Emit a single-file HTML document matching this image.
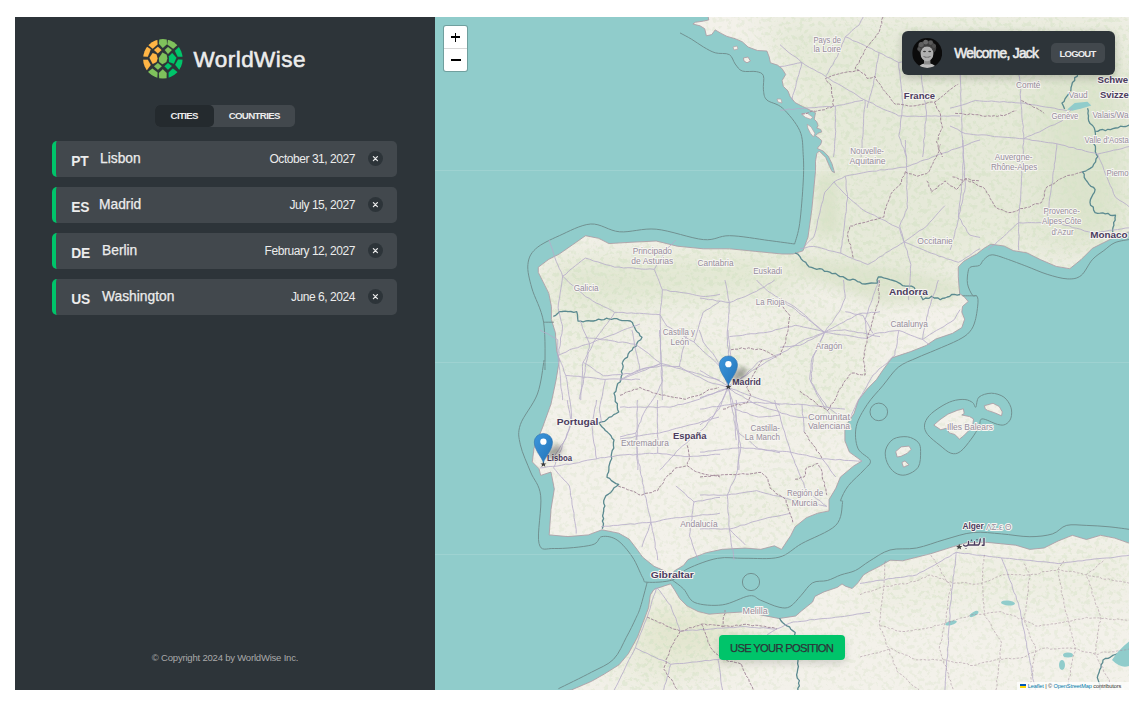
<!DOCTYPE html>
<html><head><meta charset="utf-8">
<style>
*{margin:0;padding:0;box-sizing:border-box}
html,body{width:1145px;height:707px;background:#fff;overflow:hidden;font-family:"Liberation Sans",sans-serif}
.app{position:absolute;left:15px;top:17px;width:1114px;height:673px}
.side{position:absolute;left:0;top:0;width:420px;height:673px;background:#2d3439}
.logo{position:absolute;left:125px;top:19px;width:46px;height:46px}
.brand{position:absolute;left:178.5px;top:30px;font-size:22.5px;font-weight:normal;color:#ececec;letter-spacing:0.45px;-webkit-text-stroke:0.55px #ececec}
.tabs{position:absolute;left:140px;top:88px;width:140px;height:21.5px;background:#42484d;border-radius:5px}
.tab{position:absolute;top:0;height:21.5px;font-size:9.7px;font-weight:bold;color:#ececec;line-height:22.6px;text-align:center;letter-spacing:-0.65px}
.tab.a{left:0;width:58.5px;background:#242a2e;border-radius:5px}
.tab.b{left:58.5px;width:81.5px}
.item{position:absolute;left:37px;width:345px;height:36px;background:#42484d;border-radius:5px;border-left:4px solid #00c46a}
.flag{position:absolute;left:15.3px;top:12.5px;font-size:13.8px;font-weight:bold;color:#ececec;letter-spacing:-0.3px}
.name{position:absolute;top:10.3px;font-size:13.8px;color:#ececec;-webkit-text-stroke:0.25px #ececec}
.date{position:absolute;right:42px;top:11px;font-size:12px;color:#ececec;letter-spacing:-0.45px}
.del{position:absolute;right:14px;top:10px;width:15px;height:15px;border-radius:50%;background:#2d3439}
.copy{position:absolute;left:0;width:420px;top:635px;text-align:center;font-size:9.5px;color:#aaa;letter-spacing:-0.2px}
.map{position:absolute;left:420px;top:0;width:694px;height:673px;overflow:hidden;background:#90cccb}
.map svg{position:absolute;left:0;top:0}
.zoom{position:absolute;left:8.8px;top:8.6px;width:23px;height:45.5px;background:#fff;border-radius:2px;box-shadow:0 0 0 1px rgba(0,0,0,0.22)}
.zoom .d{position:absolute;left:0;top:22.7px;width:23px;height:1px;background:#d8d8d8}
.zoom .h{position:absolute;background:#000}
.user{position:absolute;left:467px;top:14px;width:213px;height:44.2px;background:#2d3439;border-radius:6px;box-shadow:0 3px 8px rgba(0,0,0,0.2)}
.user .ava{position:absolute;left:10px;top:7px;width:30.4px;height:30px}
.welc{position:absolute;left:52.3px;top:15px;font-size:13.8px;font-weight:normal;color:#ececec;letter-spacing:-0.72px;-webkit-text-stroke:0.55px #ececec}
.logout{position:absolute;left:149px;top:11.8px;width:53.8px;height:20.7px;background:#42484d;border-radius:5px;font-size:9.5px;font-weight:bold;color:#ececec;text-align:center;line-height:21.5px;letter-spacing:-0.8px;text-indent:-0.8px}
.pos{position:absolute;left:284px;top:617.5px;width:126px;height:25.6px;background:#00c46a;border-radius:4px;font-size:11.2px;color:#2d3439;text-align:center;line-height:27px;box-shadow:0 3px 8px rgba(0,0,0,0.15);letter-spacing:-0.68px;text-indent:-0.68px;-webkit-text-stroke:0.25px #2d3439}
.attr{position:absolute;right:0;bottom:0;width:112px;height:8.2px;background:rgba(255,255,255,0.75);font-size:5.6px;line-height:8.4px;padding:0 0 0 2.7px;color:#333;white-space:nowrap;letter-spacing:-0.1px}
.attr b{font-weight:normal;color:#0078a8}
</style></head><body>
<div class="app">
 <div class="side">
  <svg class="logo" viewBox="0 0 707 707"><defs><clipPath id="lgc"><circle cx="351.5" cy="350" r="304"/></clipPath></defs><g clip-path="url(#lgc)"><path d="M97.9 116.1 L172.7 54.9 L262.9 16.6 L270.0 130.0 L195.0 195.0 Z" fill="#ffb545" stroke="#ffb545" stroke-width="2" stroke-linejoin="round"/><path d="M8.3 315.3 L30.2 224.4 L74.9 143.8 L165.0 205.0 L150.0 245.0 L120.0 320.0 Z" fill="#ffb545" stroke="#ffb545" stroke-width="2" stroke-linejoin="round"/><path d="M215.0 215.0 L275.0 165.0 L330.0 215.0 L275.0 270.0 Z" fill="#ffb545" stroke="#ffb545" stroke-width="2" stroke-linejoin="round"/><path d="M145.0 335.0 L195.0 260.0 L255.0 285.0 L270.0 345.0 L255.0 400.0 L195.0 430.0 Z" fill="#ffb545" stroke="#ffb545" stroke-width="2" stroke-linejoin="round"/><path d="M6.9 367.4 L120.0 365.0 L165.0 445.0 L79.1 561.8 L26.4 465.5 Z" fill="#ffb545" stroke="#ffb545" stroke-width="2" stroke-linejoin="round"/><path d="M290.0 120.0 L303.4 8.4 L407.5 9.6 L415.0 125.0 L350.0 185.0 Z" fill="#7fc15c" stroke="#7fc15c" stroke-width="2" stroke-linejoin="round"/><path d="M436.3 15.6 L522.6 50.4 L603.3 114.1 L510.0 195.0 L420.0 130.0 Z" fill="#7fc15c" stroke="#7fc15c" stroke-width="2" stroke-linejoin="round"/><path d="M380.0 215.0 L430.0 170.0 L490.0 215.0 L430.0 275.0 Z" fill="#7fc15c" stroke="#7fc15c" stroke-width="2" stroke-linejoin="round"/><path d="M290.0 340.0 L345.0 255.0 L410.0 290.0 L420.0 345.0 L405.0 400.0 L345.0 435.0 L295.0 400.0 Z" fill="#7fc15c" stroke="#7fc15c" stroke-width="2" stroke-linejoin="round"/><path d="M215.0 465.0 L275.0 415.0 L335.0 465.0 L275.0 520.0 Z" fill="#7fc15c" stroke="#7fc15c" stroke-width="2" stroke-linejoin="round"/><path d="M91.8 577.1 L190.0 500.0 L270.0 560.0 L263.5 683.6 L172.7 645.1 Z" fill="#7fc15c" stroke="#7fc15c" stroke-width="2" stroke-linejoin="round"/><path d="M290.0 570.0 L350.0 510.0 L410.0 570.0 L406.6 690.6 L298.7 690.9 Z" fill="#7fc15c" stroke="#7fc15c" stroke-width="2" stroke-linejoin="round"/><path d="M535.0 225.0 L626.9 142.2 L668.3 213.5 L694.8 316.1 L580.0 320.0 Z" fill="#00c46a" stroke="#00c46a" stroke-width="2" stroke-linejoin="round"/><path d="M445.0 310.0 L495.0 260.0 L560.0 335.0 L520.0 425.0 L445.0 400.0 Z" fill="#00c46a" stroke="#00c46a" stroke-width="2" stroke-linejoin="round"/><path d="M375.0 465.0 L430.0 415.0 L490.0 460.0 L430.0 520.0 Z" fill="#00c46a" stroke="#00c46a" stroke-width="2" stroke-linejoin="round"/><path d="M540.0 440.0 L585.0 360.0 L696.1 367.0 L676.9 464.8 L629.7 554.1 Z" fill="#00c46a" stroke="#00c46a" stroke-width="2" stroke-linejoin="round"/><path d="M441.6 683.0 L440.0 560.0 L505.0 500.0 L609.6 579.0 L527.7 646.6 Z" fill="#00c46a" stroke="#00c46a" stroke-width="2" stroke-linejoin="round"/></g></svg>
  <div class="brand">WorldWise</div>
  <div class="tabs"><div class="tab a">CITIES</div><div class="tab b">COUNTRIES</div></div>
  <div class="item" style="top:124px"><span class="flag">PT</span><span class="name" style="left:44px">Lisbon</span><span class="date">October 31, 2027</span><span class="del"><svg width="15" height="15" viewBox="0 0 15 15" style="position:absolute;left:0;top:0"><path d="M5.4 5.6 L9.4 9.6 M9.4 5.6 L5.4 9.6" stroke="#ececec" stroke-width="1.25" stroke-linecap="round"/></svg></span></div>
  <div class="item" style="top:170px"><span class="flag">ES</span><span class="name" style="left:43px">Madrid</span><span class="date">July 15, 2027</span><span class="del"><svg width="15" height="15" viewBox="0 0 15 15" style="position:absolute;left:0;top:0"><path d="M5.4 5.6 L9.4 9.6 M9.4 5.6 L5.4 9.6" stroke="#ececec" stroke-width="1.25" stroke-linecap="round"/></svg></span></div>
  <div class="item" style="top:216px"><span class="flag">DE</span><span class="name" style="left:46px">Berlin</span><span class="date">February 12, 2027</span><span class="del"><svg width="15" height="15" viewBox="0 0 15 15" style="position:absolute;left:0;top:0"><path d="M5.4 5.6 L9.4 9.6 M9.4 5.6 L5.4 9.6" stroke="#ececec" stroke-width="1.25" stroke-linecap="round"/></svg></span></div>
  <div class="item" style="top:262px"><span class="flag">US</span><span class="name" style="left:46px">Washington</span><span class="date">June 6, 2024</span><span class="del"><svg width="15" height="15" viewBox="0 0 15 15" style="position:absolute;left:0;top:0"><path d="M5.4 5.6 L9.4 9.6 M9.4 5.6 L5.4 9.6" stroke="#ececec" stroke-width="1.25" stroke-linecap="round"/></svg></span></div>
  <div class="copy">© Copyright 2024 by WorldWise Inc.</div>
 </div>
 <div class="map">
  <svg width="694" height="673" viewBox="435 17 694 673"><defs><clipPath id="lc"><path d="M707.5 10.0 L708.2 17.0 L708.8 19.9 L703.5 21.1 L695.3 22.3 L692.9 24.0 L700.0 25.8 L704.7 28.7 L706.4 35.8 L711.7 34.6 L715.2 29.9 L721.1 33.4 L727.0 36.4 L735.2 38.7 L742.2 41.7 L748.1 47.0 L757.5 50.5 L766.9 51.0 L769.2 57.0 L770.4 62.8 L777.5 65.1 L782.1 68.7 L785.7 74.5 L782.1 80.4 L783.3 86.3 L788.0 91.0 L790.0 96.3 L795.1 102.6 L802.7 106.5 L810.4 110.3 L815.5 112.8 L814.2 119.2 L816.8 121.8 L818.0 125.6 L816.8 128.1 L820.6 129.4 L821.8 131.9 L818.0 133.2 L815.5 135.8 L819.3 138.3 L821.8 140.9 L820.6 144.7 L818.0 147.2 L817.4 148.5 L823.1 151.0 L828.2 156.1 L832.0 163.8 L834.6 172.7 L832.0 171.4 L829.5 166.3 L825.7 157.4 L819.3 151.0 L816.8 153.6 L815.5 161.2 L815.5 171.4 L814.2 185.0 L811.8 209.6 L808.0 237.0 L803.0 250.8 L793.0 254.0 L782.0 254.0 L755.8 251.4 L729.6 248.8 L703.4 248.8 L677.2 246.2 L656.2 241.0 L630.0 242.3 L609.0 243.6 L598.6 238.3 L585.5 235.7 L572.4 244.9 L559.3 254.0 L548.8 259.3 L538.3 267.2 L538.3 272.4 L543.6 282.9 L548.8 293.4 L551.4 306.5 L551.4 319.6 L555.4 332.7 L556.7 351.0 L559.4 360.0 L556.0 380.4 L551.0 404.0 L542.4 427.9 L534.0 448.3 L532.3 461.9 L539.0 468.7 L540.7 475.4 L551.0 472.0 L554.3 489.0 L551.0 509.4 L549.2 534.9 L568.0 536.6 L588.3 534.9 L601.9 529.8 L618.8 533.2 L629.0 539.0 L636.0 548.0 L642.7 557.2 L654.0 566.3 L665.0 571.0 L668.7 576.5 L670.5 580.2 L674.2 571.0 L683.4 565.5 L688.1 559.5 L706.3 552.7 L722.2 549.3 L744.9 548.1 L760.8 549.3 L774.4 545.8 L781.5 549.4 L790.6 535.8 L795.1 526.8 L806.4 517.7 L817.7 513.2 L829.0 510.9 L829.0 499.6 L835.8 488.3 L840.4 477.0 L854.0 465.7 L861.9 461.1 L849.4 452.1 L844.9 440.8 L844.9 427.2 L854.0 413.6 L858.5 400.0 L867.2 389.0 L876.5 379.6 L882.7 370.3 L892.0 357.8 L910.7 351.6 L926.3 345.4 L935.6 339.1 L952.6 333.3 L961.8 327.6 L964.6 319.2 L961.8 312.1 L962.5 306.4 L968.2 301.5 L963.9 296.5 L959.7 293.7 L959.0 286.6 L958.3 276.7 L958.3 266.9 L963.9 261.2 L971.0 257.0 L976.6 254.1 L983.7 248.5 L990.8 244.2 L1004.1 246.0 L1013.2 250.6 L1026.8 252.8 L1040.4 259.6 L1056.2 266.4 L1069.8 268.7 L1081.1 259.6 L1092.4 248.3 L1103.8 242.6 L1115.0 237.0 L1126.4 232.4 L1140.0 230.2 L1140.0 10.0 Z M540.0 700.0 L560.0 691.0 L571.3 690.0 L591.5 681.3 L604.4 674.0 L619.0 664.8 L628.3 653.8 L637.4 637.2 L643.0 622.5 L648.5 607.8 L650.3 595.0 L654.0 589.4 L665.0 585.7 L670.5 583.9 L674.2 589.4 L679.7 598.6 L687.1 606.0 L698.1 611.5 L709.1 614.2 L720.0 613.3 L729.0 612.8 L747.2 611.7 L760.8 615.0 L779.0 618.5 L795.7 616.0 L801.3 611.1 L812.6 602.0 L814.9 596.4 L823.9 591.9 L837.5 587.3 L842.0 583.9 L845.4 586.2 L852.2 588.5 L857.9 582.8 L863.5 574.9 L869.2 571.5 L880.5 565.8 L890.0 560.2 L902.5 560.8 L930.8 553.7 L953.4 546.6 L967.6 542.4 L987.4 542.4 L1015.7 545.2 L1029.8 549.4 L1044.0 548.0 L1058.1 541.0 L1072.3 535.3 L1086.4 539.5 L1100.6 535.3 L1114.7 538.1 L1131.0 543.8 L1140.0 545.0 L1140.0 700.0 Z M933.8 425.1 L940.0 419.7 L947.8 414.2 L957.2 410.4 L963.4 408.8 L964.2 413.5 L961.8 415.0 L969.6 416.6 L973.5 418.9 L972.7 425.1 L969.6 429.8 L963.4 436.0 L959.5 439.1 L954.8 434.5 L949.4 432.9 L946.3 428.2 L940.8 429.8 Z M984.4 405.7 L993.0 403.3 L999.2 406.5 L1002.3 411.9 L1001.5 415.8 L994.5 412.7 L987.5 410.4 L985.2 408.8 Z M895.7 451.6 L901.1 446.9 L908.9 446.1 L911.2 449.3 L907.4 453.2 L901.1 456.3 L897.2 457.0 Z M901.9 462.5 L905.0 460.9 L908.9 464.8 L903.5 467.2 Z M743.4 58.0 L748.0 57.0 L750.4 61.0 L747.0 62.8 L744.0 61.0 Z"/></clipPath><filter id="b12" x="-50%" y="-50%" width="200%" height="200%"><feGaussianBlur stdDeviation="16"/></filter><filter id="b6" x="-50%" y="-50%" width="200%" height="200%"><feGaussianBlur stdDeviation="6"/></filter><filter id="sh" x="-50%" y="-50%" width="200%" height="200%"><feGaussianBlur stdDeviation="2.5"/></filter><linearGradient id="mk" x1="0" y1="0" x2="1" y2="1"><stop offset="0" stop-color="#3d97dd"/><stop offset="1" stop-color="#2273b8"/></linearGradient></defs>
<path d="M707.5 10.0 L708.2 17.0 L708.8 19.9 L703.5 21.1 L695.3 22.3 L692.9 24.0 L700.0 25.8 L704.7 28.7 L706.4 35.8 L711.7 34.6 L715.2 29.9 L721.1 33.4 L727.0 36.4 L735.2 38.7 L742.2 41.7 L748.1 47.0 L757.5 50.5 L766.9 51.0 L769.2 57.0 L770.4 62.8 L777.5 65.1 L782.1 68.7 L785.7 74.5 L782.1 80.4 L783.3 86.3 L788.0 91.0 L790.0 96.3 L795.1 102.6 L802.7 106.5 L810.4 110.3 L815.5 112.8 L814.2 119.2 L816.8 121.8 L818.0 125.6 L816.8 128.1 L820.6 129.4 L821.8 131.9 L818.0 133.2 L815.5 135.8 L819.3 138.3 L821.8 140.9 L820.6 144.7 L818.0 147.2 L817.4 148.5 L823.1 151.0 L828.2 156.1 L832.0 163.8 L834.6 172.7 L832.0 171.4 L829.5 166.3 L825.7 157.4 L819.3 151.0 L816.8 153.6 L815.5 161.2 L815.5 171.4 L814.2 185.0 L811.8 209.6 L808.0 237.0 L803.0 250.8 L793.0 254.0 L782.0 254.0 L755.8 251.4 L729.6 248.8 L703.4 248.8 L677.2 246.2 L656.2 241.0 L630.0 242.3 L609.0 243.6 L598.6 238.3 L585.5 235.7 L572.4 244.9 L559.3 254.0 L548.8 259.3 L538.3 267.2 L538.3 272.4 L543.6 282.9 L548.8 293.4 L551.4 306.5 L551.4 319.6 L555.4 332.7 L556.7 351.0 L559.4 360.0 L556.0 380.4 L551.0 404.0 L542.4 427.9 L534.0 448.3 L532.3 461.9 L539.0 468.7 L540.7 475.4 L551.0 472.0 L554.3 489.0 L551.0 509.4 L549.2 534.9 L568.0 536.6 L588.3 534.9 L601.9 529.8 L618.8 533.2 L629.0 539.0 L636.0 548.0 L642.7 557.2 L654.0 566.3 L665.0 571.0 L668.7 576.5 L670.5 580.2 L674.2 571.0 L683.4 565.5 L688.1 559.5 L706.3 552.7 L722.2 549.3 L744.9 548.1 L760.8 549.3 L774.4 545.8 L781.5 549.4 L790.6 535.8 L795.1 526.8 L806.4 517.7 L817.7 513.2 L829.0 510.9 L829.0 499.6 L835.8 488.3 L840.4 477.0 L854.0 465.7 L861.9 461.1 L849.4 452.1 L844.9 440.8 L844.9 427.2 L854.0 413.6 L858.5 400.0 L867.2 389.0 L876.5 379.6 L882.7 370.3 L892.0 357.8 L910.7 351.6 L926.3 345.4 L935.6 339.1 L952.6 333.3 L961.8 327.6 L964.6 319.2 L961.8 312.1 L962.5 306.4 L968.2 301.5 L963.9 296.5 L959.7 293.7 L959.0 286.6 L958.3 276.7 L958.3 266.9 L963.9 261.2 L971.0 257.0 L976.6 254.1 L983.7 248.5 L990.8 244.2 L1004.1 246.0 L1013.2 250.6 L1026.8 252.8 L1040.4 259.6 L1056.2 266.4 L1069.8 268.7 L1081.1 259.6 L1092.4 248.3 L1103.8 242.6 L1115.0 237.0 L1126.4 232.4 L1140.0 230.2 L1140.0 10.0 Z" fill="#f3f1ea"/>
<path d="M540.0 700.0 L560.0 691.0 L571.3 690.0 L591.5 681.3 L604.4 674.0 L619.0 664.8 L628.3 653.8 L637.4 637.2 L643.0 622.5 L648.5 607.8 L650.3 595.0 L654.0 589.4 L665.0 585.7 L670.5 583.9 L674.2 589.4 L679.7 598.6 L687.1 606.0 L698.1 611.5 L709.1 614.2 L720.0 613.3 L729.0 612.8 L747.2 611.7 L760.8 615.0 L779.0 618.5 L795.7 616.0 L801.3 611.1 L812.6 602.0 L814.9 596.4 L823.9 591.9 L837.5 587.3 L842.0 583.9 L845.4 586.2 L852.2 588.5 L857.9 582.8 L863.5 574.9 L869.2 571.5 L880.5 565.8 L890.0 560.2 L902.5 560.8 L930.8 553.7 L953.4 546.6 L967.6 542.4 L987.4 542.4 L1015.7 545.2 L1029.8 549.4 L1044.0 548.0 L1058.1 541.0 L1072.3 535.3 L1086.4 539.5 L1100.6 535.3 L1114.7 538.1 L1131.0 543.8 L1140.0 545.0 L1140.0 700.0 Z" fill="#f3f1ea"/>
<path d="M933.8 425.1 L940.0 419.7 L947.8 414.2 L957.2 410.4 L963.4 408.8 L964.2 413.5 L961.8 415.0 L969.6 416.6 L973.5 418.9 L972.7 425.1 L969.6 429.8 L963.4 436.0 L959.5 439.1 L954.8 434.5 L949.4 432.9 L946.3 428.2 L940.8 429.8 Z" fill="#f3f1ea"/>
<path d="M984.4 405.7 L993.0 403.3 L999.2 406.5 L1002.3 411.9 L1001.5 415.8 L994.5 412.7 L987.5 410.4 L985.2 408.8 Z" fill="#f3f1ea"/>
<path d="M895.7 451.6 L901.1 446.9 L908.9 446.1 L911.2 449.3 L907.4 453.2 L901.1 456.3 L897.2 457.0 Z" fill="#f3f1ea"/>
<path d="M901.9 462.5 L905.0 460.9 L908.9 464.8 L903.5 467.2 Z" fill="#f3f1ea"/>
<path d="M743.4 58.0 L748.0 57.0 L750.4 61.0 L747.0 62.8 L744.0 61.0 Z" fill="#f3f1ea"/>
<g clip-path="url(#lc)"><path d="M760.0 17.0 L1130.0 17.0 L1130.0 235.0 L1060.0 262.0 L980.0 250.0 L955.0 270.0 L900.0 280.0 L830.0 270.0 L812.0 240.0 L820.0 150.0 L780.0 70.0 Z" fill="#d9e2c8" opacity="0.51" filter="url(#b12)"/><path d="M815.0 170.0 L835.0 175.0 L840.0 230.0 L815.0 240.0 Z" fill="#c9d8b2" opacity="0.42" filter="url(#b6)"/><path d="M1040.0 80.0 L1130.0 60.0 L1130.0 230.0 L1060.0 250.0 L1040.0 160.0 Z" fill="#cfdcbc" opacity="0.42" filter="url(#b12)"/><path d="M790.0 255.0 L960.0 280.0 L960.0 300.0 L880.0 305.0 L800.0 275.0 Z" fill="#cddab8" opacity="0.48" filter="url(#b6)"/><path d="M540.0 260.0 L800.0 250.0 L800.0 290.0 L700.0 300.0 L560.0 310.0 Z" fill="#dae3c8" opacity="0.75" filter="url(#b12)"/><path d="M545.0 290.0 L620.0 300.0 L620.0 380.0 L560.0 380.0 Z" fill="#e2e8d3" opacity="0.36" filter="url(#b12)"/><path d="M650.0 340.0 L760.0 340.0 L760.0 380.0 L650.0 380.0 Z" fill="#e3e8d4" opacity="0.36" filter="url(#b12)"/><path d="M780.0 300.0 L880.0 320.0 L860.0 420.0 L800.0 430.0 L770.0 380.0 Z" fill="#e2e8d3" opacity="0.36" filter="url(#b12)"/><path d="M700.0 500.0 L820.0 470.0 L830.0 520.0 L700.0 540.0 Z" fill="#e6ead8" opacity="0.3" filter="url(#b12)"/><path d="M640.0 600.0 L730.0 610.0 L760.0 640.0 L700.0 670.0 L630.0 660.0 Z" fill="#dde2c4" opacity="0.7" filter="url(#b12)"/><path d="M620.0 650.0 L680.0 640.0 L690.0 690.0 L600.0 690.0 Z" fill="#e4e8d2" opacity="0.36" filter="url(#b12)"/><path d="M860.0 570.0 L1130.0 540.0 L1130.0 600.0 L860.0 610.0 Z" fill="#e2e7d1" opacity="0.3" filter="url(#b12)"/></g>
<filter id="tx" x="0" y="0" width="1" height="1"><feTurbulence type="fractalNoise" baseFrequency="0.22" numOctaves="3" seed="7"/><feColorMatrix type="matrix" values="0 0 0 0 0.68  0 0 0 0 0.77  0 0 0 0 0.58  -7 0 0 0 3.4"/></filter>
<mask id="txm"><rect x="435" y="17" width="695" height="673" fill="#555"/><path d="M760.0 17.0 L1130.0 17.0 L1130.0 235.0 L1060.0 262.0 L980.0 250.0 L955.0 270.0 L900.0 280.0 L830.0 270.0 L812.0 240.0 L820.0 150.0 L780.0 70.0 Z" fill="#fff" opacity="0.51" filter="url(#b12)"/><path d="M815.0 170.0 L835.0 175.0 L840.0 230.0 L815.0 240.0 Z" fill="#fff" opacity="0.42" filter="url(#b6)"/><path d="M1040.0 80.0 L1130.0 60.0 L1130.0 230.0 L1060.0 250.0 L1040.0 160.0 Z" fill="#fff" opacity="0.42" filter="url(#b12)"/><path d="M790.0 255.0 L960.0 280.0 L960.0 300.0 L880.0 305.0 L800.0 275.0 Z" fill="#fff" opacity="0.48" filter="url(#b6)"/><path d="M540.0 260.0 L800.0 250.0 L800.0 290.0 L700.0 300.0 L560.0 310.0 Z" fill="#fff" opacity="0.75" filter="url(#b12)"/><path d="M545.0 290.0 L620.0 300.0 L620.0 380.0 L560.0 380.0 Z" fill="#fff" opacity="0.36" filter="url(#b12)"/><path d="M650.0 340.0 L760.0 340.0 L760.0 380.0 L650.0 380.0 Z" fill="#fff" opacity="0.36" filter="url(#b12)"/><path d="M780.0 300.0 L880.0 320.0 L860.0 420.0 L800.0 430.0 L770.0 380.0 Z" fill="#fff" opacity="0.36" filter="url(#b12)"/><path d="M700.0 500.0 L820.0 470.0 L830.0 520.0 L700.0 540.0 Z" fill="#fff" opacity="0.3" filter="url(#b12)"/><path d="M640.0 600.0 L730.0 610.0 L760.0 640.0 L700.0 670.0 L630.0 660.0 Z" fill="#fff" opacity="0.7" filter="url(#b12)"/><path d="M620.0 650.0 L680.0 640.0 L690.0 690.0 L600.0 690.0 Z" fill="#fff" opacity="0.36" filter="url(#b12)"/><path d="M860.0 570.0 L1130.0 540.0 L1130.0 600.0 L860.0 610.0 Z" fill="#fff" opacity="0.3" filter="url(#b12)"/></mask>
<g clip-path="url(#lc)"><rect x="435" y="17" width="695" height="673" filter="url(#tx)" mask="url(#txm)" opacity="1"/></g>
<path d="M707.5 10.0 L708.2 17.0 L708.8 19.9 L703.5 21.1 L695.3 22.3 L692.9 24.0 L700.0 25.8 L704.7 28.7 L706.4 35.8 L711.7 34.6 L715.2 29.9 L721.1 33.4 L727.0 36.4 L735.2 38.7 L742.2 41.7 L748.1 47.0 L757.5 50.5 L766.9 51.0 L769.2 57.0 L770.4 62.8 L777.5 65.1 L782.1 68.7 L785.7 74.5 L782.1 80.4 L783.3 86.3 L788.0 91.0 L790.0 96.3 L795.1 102.6 L802.7 106.5 L810.4 110.3 L815.5 112.8 L814.2 119.2 L816.8 121.8 L818.0 125.6 L816.8 128.1 L820.6 129.4 L821.8 131.9 L818.0 133.2 L815.5 135.8 L819.3 138.3 L821.8 140.9 L820.6 144.7 L818.0 147.2 L817.4 148.5 L823.1 151.0 L828.2 156.1 L832.0 163.8 L834.6 172.7 L832.0 171.4 L829.5 166.3 L825.7 157.4 L819.3 151.0 L816.8 153.6 L815.5 161.2 L815.5 171.4 L814.2 185.0 L811.8 209.6 L808.0 237.0 L803.0 250.8 L793.0 254.0 L782.0 254.0 L755.8 251.4 L729.6 248.8 L703.4 248.8 L677.2 246.2 L656.2 241.0 L630.0 242.3 L609.0 243.6 L598.6 238.3 L585.5 235.7 L572.4 244.9 L559.3 254.0 L548.8 259.3 L538.3 267.2 L538.3 272.4 L543.6 282.9 L548.8 293.4 L551.4 306.5 L551.4 319.6 L555.4 332.7 L556.7 351.0 L559.4 360.0 L556.0 380.4 L551.0 404.0 L542.4 427.9 L534.0 448.3 L532.3 461.9 L539.0 468.7 L540.7 475.4 L551.0 472.0 L554.3 489.0 L551.0 509.4 L549.2 534.9 L568.0 536.6 L588.3 534.9 L601.9 529.8 L618.8 533.2 L629.0 539.0 L636.0 548.0 L642.7 557.2 L654.0 566.3 L665.0 571.0 L668.7 576.5 L670.5 580.2 L674.2 571.0 L683.4 565.5 L688.1 559.5 L706.3 552.7 L722.2 549.3 L744.9 548.1 L760.8 549.3 L774.4 545.8 L781.5 549.4 L790.6 535.8 L795.1 526.8 L806.4 517.7 L817.7 513.2 L829.0 510.9 L829.0 499.6 L835.8 488.3 L840.4 477.0 L854.0 465.7 L861.9 461.1 L849.4 452.1 L844.9 440.8 L844.9 427.2 L854.0 413.6 L858.5 400.0 L867.2 389.0 L876.5 379.6 L882.7 370.3 L892.0 357.8 L910.7 351.6 L926.3 345.4 L935.6 339.1 L952.6 333.3 L961.8 327.6 L964.6 319.2 L961.8 312.1 L962.5 306.4 L968.2 301.5 L963.9 296.5 L959.7 293.7 L959.0 286.6 L958.3 276.7 L958.3 266.9 L963.9 261.2 L971.0 257.0 L976.6 254.1 L983.7 248.5 L990.8 244.2 L1004.1 246.0 L1013.2 250.6 L1026.8 252.8 L1040.4 259.6 L1056.2 266.4 L1069.8 268.7 L1081.1 259.6 L1092.4 248.3 L1103.8 242.6 L1115.0 237.0 L1126.4 232.4 L1140.0 230.2 L1140.0 10.0 Z M540.0 700.0 L560.0 691.0 L571.3 690.0 L591.5 681.3 L604.4 674.0 L619.0 664.8 L628.3 653.8 L637.4 637.2 L643.0 622.5 L648.5 607.8 L650.3 595.0 L654.0 589.4 L665.0 585.7 L670.5 583.9 L674.2 589.4 L679.7 598.6 L687.1 606.0 L698.1 611.5 L709.1 614.2 L720.0 613.3 L729.0 612.8 L747.2 611.7 L760.8 615.0 L779.0 618.5 L795.7 616.0 L801.3 611.1 L812.6 602.0 L814.9 596.4 L823.9 591.9 L837.5 587.3 L842.0 583.9 L845.4 586.2 L852.2 588.5 L857.9 582.8 L863.5 574.9 L869.2 571.5 L880.5 565.8 L890.0 560.2 L902.5 560.8 L930.8 553.7 L953.4 546.6 L967.6 542.4 L987.4 542.4 L1015.7 545.2 L1029.8 549.4 L1044.0 548.0 L1058.1 541.0 L1072.3 535.3 L1086.4 539.5 L1100.6 535.3 L1114.7 538.1 L1131.0 543.8 L1140.0 545.0 L1140.0 700.0 Z M933.8 425.1 L940.0 419.7 L947.8 414.2 L957.2 410.4 L963.4 408.8 L964.2 413.5 L961.8 415.0 L969.6 416.6 L973.5 418.9 L972.7 425.1 L969.6 429.8 L963.4 436.0 L959.5 439.1 L954.8 434.5 L949.4 432.9 L946.3 428.2 L940.8 429.8 Z M984.4 405.7 L993.0 403.3 L999.2 406.5 L1002.3 411.9 L1001.5 415.8 L994.5 412.7 L987.5 410.4 L985.2 408.8 Z M895.7 451.6 L901.1 446.9 L908.9 446.1 L911.2 449.3 L907.4 453.2 L901.1 456.3 L897.2 457.0 Z M901.9 462.5 L905.0 460.9 L908.9 464.8 L903.5 467.2 Z M743.4 58.0 L748.0 57.0 L750.4 61.0 L747.0 62.8 L744.0 61.0 Z" fill="none" stroke="#ab9ca4" stroke-width="1" opacity="0.85"/>
<g fill="#f3f1ea" stroke="#b0a0a8" stroke-width="0.7"><path d="M801.5 114.1 L806.6 112.8 L812.9 117.3 L810.4 119.2 L805.3 117.3 Z"/><path d="M807.2 124.3 L811 126.8 L814.8 133.2 L813.6 137 L810.4 133.2 L807.8 128.1 Z"/><path d="M777 99 L781 99 L782 103 L778 102 Z"/><path d="M733 47 L737 46 L738 49 L734 50 Z"/></g>
<g fill="none" stroke="#647878" stroke-width="1" opacity="0.7"><path d="M680.0 32.9 C682.0 34.0 687.8 36.9 691.7 39.3 C695.6 41.6 699.6 44.8 703.5 47.0 C707.4 49.2 710.9 51.5 715.2 52.8 C719.5 54.1 726.0 52.7 729.3 54.6 C732.6 56.5 733.1 61.3 735.2 64.0 C737.4 66.7 738.7 69.7 742.2 71.0 C745.7 72.3 752.8 70.8 756.3 71.6 C759.8 72.4 762.2 72.7 763.4 75.7 C764.6 78.7 762.8 85.8 763.4 89.8 C764.0 93.8 763.7 97.0 766.9 100.0 C770.1 103.0 777.0 103.0 782.5 108.1 C788.0 113.2 796.2 122.8 799.7 130.5 C803.2 138.2 802.6 146.0 803.2 154.6 C803.8 163.2 803.8 170.6 803.2 182.0 C802.6 193.4 801.1 213.0 799.7 223.3 C798.3 233.6 795.5 240.6 794.6 244.0"/><path d="M545.0 370.0 C544.8 362.0 545.8 335.9 543.6 322.2 C541.4 308.5 534.4 297.6 531.8 288.0 C529.2 278.4 527.2 271.0 527.9 264.5 C528.5 258.0 530.5 253.6 535.7 248.8 C540.9 244.0 550.1 239.8 559.3 235.7 C568.5 231.6 580.7 224.7 590.7 224.0 C600.8 223.3 608.7 230.9 619.6 231.8 C630.5 232.7 642.2 227.9 656.2 229.2 C670.2 230.5 691.2 238.5 703.4 239.6 C715.6 240.7 718.7 235.5 729.6 235.7 C740.5 235.8 758.0 239.1 768.8 240.5 C779.6 241.9 790.3 243.4 794.6 244.0"/><path d="M543.6 322.2 C545.3 322.2 552.3 322.2 554.0 322.2"/><path d="M544.1 360.0 C543.0 365.7 541.4 383.2 537.4 394.0 C533.4 404.8 523.2 416.0 520.4 424.5 C517.6 433.0 518.7 437.0 520.4 444.9 C522.1 452.8 527.2 463.5 530.6 472.0 C534.0 480.5 539.3 483.9 540.7 495.8 C542.1 507.7 536.7 534.6 539.0 543.4 C541.3 552.2 545.5 548.2 554.3 548.5 C563.1 548.8 583.8 547.0 591.7 545.0 C599.6 543.0 597.7 537.4 601.9 536.6 C606.1 535.8 612.0 536.6 617.1 540.0 C622.2 543.4 628.1 550.7 632.4 557.0 C636.7 563.3 640.2 573.4 642.7 577.6 C645.2 581.8 642.3 581.8 647.2 582.2 C652.1 582.6 665.4 582.3 672.2 580.0 C679.0 577.7 680.4 572.2 688.0 568.6 C695.6 565.0 708.1 560.0 717.6 558.3 C727.1 556.6 734.7 558.5 744.9 558.3 C755.1 558.1 769.5 559.7 779.0 557.2 C788.5 554.8 792.2 548.9 801.7 543.6 C811.2 538.3 828.9 532.2 835.7 525.4 C842.5 518.6 841.7 506.9 842.5 502.7 C843.3 498.5 839.7 502.9 840.7 500.0 C841.7 497.1 844.6 490.5 848.5 485.5 C852.4 480.5 860.4 474.1 864.0 469.9 C867.6 465.7 871.3 464.1 870.3 460.5 C869.3 456.9 860.1 453.8 857.8 448.1 C855.5 442.4 854.7 433.6 856.3 426.3 C857.9 419.0 862.8 411.2 867.2 404.5 C871.6 397.8 877.5 392.0 882.7 385.8 C887.9 379.6 892.6 371.9 898.3 367.2 C904.0 362.5 910.8 360.7 917.0 357.8 C923.2 354.9 928.7 353.0 935.6 350.0 C942.5 347.0 952.6 343.0 958.3 340.0 C964.0 337.0 966.8 335.1 969.6 331.9 C972.4 328.7 973.8 325.6 975.2 320.6 C976.6 315.7 977.8 306.3 978.0 302.2 C978.2 298.1 977.5 297.0 976.6 295.8 C975.7 294.6 973.9 297.1 972.4 295.1 C970.9 293.1 968.2 287.8 967.5 283.8 C966.8 279.8 967.6 273.9 968.2 271.1 C968.8 268.3 969.1 267.8 971.0 266.9 C972.9 265.9 977.4 266.6 979.5 265.4 C981.6 264.2 981.6 261.6 983.7 259.8 C985.8 258.0 988.0 254.8 992.2 254.8 C996.4 254.8 1006.0 258.8 1008.7 259.6"/><path d="M647.2 582.2 C646.1 586.4 642.3 601.1 640.4 607.2 C638.5 613.3 637.9 613.8 635.6 618.8 C633.3 623.8 630.1 630.5 626.4 637.2 C622.7 644.0 619.3 653.5 613.5 659.3 C607.7 665.1 600.7 667.3 591.5 672.2 C582.3 677.1 563.9 686.0 558.4 688.7"/><path d="M672.2 580.0 C674.1 581.5 679.8 585.2 683.6 589.0 C687.4 592.8 688.5 600.0 694.9 602.6 C701.3 605.2 713.1 606.0 722.2 604.9 C731.3 603.8 743.0 596.6 749.4 595.8 C755.8 595.0 755.9 598.4 760.8 600.3 C765.7 602.2 774.1 606.2 779.0 607.2 C783.9 608.2 786.3 608.6 790.0 606.6 C793.7 604.6 797.5 599.2 801.3 595.2 C805.1 591.2 808.3 585.2 812.6 582.8 C816.9 580.3 822.6 581.8 827.3 580.5 C832.0 579.2 836.2 576.6 840.9 574.9 C845.6 573.2 850.9 572.7 855.6 570.4 C860.3 568.1 863.5 564.7 869.2 561.3 C874.9 557.9 882.1 552.2 890.0 550.0 C897.9 547.8 907.5 549.8 916.6 548.0 C925.8 546.2 935.5 542.1 944.9 539.5 C954.3 536.9 963.8 533.4 973.2 532.5 C982.6 531.6 992.1 533.2 1001.5 533.9 C1010.9 534.6 1021.3 536.7 1029.8 536.7 C1038.3 536.7 1046.4 535.8 1052.5 533.9 C1058.6 532.0 1060.9 526.8 1066.6 525.4 C1072.2 524.0 1079.3 525.2 1086.4 525.4 C1093.5 525.6 1101.7 526.1 1109.1 526.8 C1116.5 527.5 1127.3 529.1 1131.0 529.6"/><path d="M1008.7 259.6 C1011.7 260.7 1020.4 263.9 1026.8 266.4 C1033.2 268.8 1040.4 272.2 1047.2 274.3 C1054.0 276.4 1061.8 278.7 1067.5 278.9 C1073.2 279.1 1076.9 278.7 1081.1 275.5 C1085.2 272.3 1088.6 263.8 1092.4 259.6 C1096.2 255.5 1100.0 253.4 1103.8 250.6 C1107.6 247.8 1110.5 244.5 1115.0 242.6 C1119.5 240.7 1128.3 239.8 1131.0 239.2"/><path d="M962.5 295.8 C964.9 295.8 974.2 295.8 976.6 295.8"/><path d="M924.5 425.1 C924.8 422.0 926.5 418.8 929.1 415.8 C931.7 412.8 936.1 409.7 940.0 407.2 C943.9 404.7 948.4 402.3 952.5 401.0 C956.6 399.7 961.5 399.2 964.9 399.5 C968.3 399.8 970.9 401.3 972.7 402.6 C974.5 403.9 974.8 408.1 975.8 407.2 C976.8 406.3 976.4 399.4 979.0 397.1 C981.6 394.8 987.2 393.2 991.4 393.2 C995.5 393.2 1000.6 394.8 1003.9 397.1 C1007.1 399.4 1009.7 403.7 1010.9 407.2 C1012.1 410.7 1011.8 415.2 1010.9 418.1 C1010.0 421.0 1007.6 423.3 1005.4 424.4 C1003.2 425.4 1001.5 425.3 997.6 424.4 C993.7 423.5 985.2 418.5 982.1 418.9 C979.0 419.3 980.8 423.3 979.0 426.7 C977.2 430.1 974.3 435.0 971.2 439.1 C968.1 443.2 963.7 449.2 960.3 451.6 C956.9 454.0 954.3 454.2 950.9 453.2 C947.5 452.2 943.9 448.5 940.0 445.4 C936.1 442.3 930.2 437.9 927.6 434.5 C925.0 431.1 924.2 428.2 924.5 425.1 Z"/><path d="M885.6 450.0 C886.6 446.1 889.7 441.3 893.3 439.1 C896.9 436.9 903.2 436.3 907.4 436.8 C911.5 437.3 916.0 439.8 918.2 442.3 C920.4 444.8 920.6 447.5 920.6 451.6 C920.6 455.8 920.7 463.3 918.2 467.2 C915.7 471.1 909.7 474.0 905.8 474.9 C901.9 475.8 898.0 474.7 894.9 472.6 C891.8 470.5 888.6 466.3 887.1 462.5 C885.6 458.7 884.6 453.9 885.6 450.0 Z"/><circle cx="878.8" cy="411.9" r="8.8"/><circle cx="751" cy="582" r="8.6"/></g>
<g fill="none" stroke="#5b8a90" stroke-width="1.3" stroke-linejoin="round"><path d="M553.3 316.3 L555.7 315.3 L557.6 313.6 L559.3 311.7 L562.2 311.5 L565.1 311.2 L568.0 311.7 L570.9 311.5 L573.8 312.3 L576.7 311.7 L577.5 314.7 L577.6 317.9 L578.0 321.0 L580.5 321.2 L583.1 321.8 L585.6 321.0 L588.2 320.6 L590.7 321.0 L593.4 321.0 L596.0 320.3 L598.5 319.1 L601.3 319.9 L604.0 319.6 L606.4 318.2 L608.9 319.0 L611.4 319.3 L614.0 318.7 L616.8 318.7 L619.4 319.9 L622.0 320.6 L624.8 320.6 L627.6 320.6 L630.3 321.0 L632.4 322.6 L633.3 325.0 L634.5 327.2 L635.5 329.6 L636.9 331.7 L639.1 333.2 L639.9 335.7 L642.0 337.3 L640.7 339.7 L638.1 341.2 L636.8 343.6 L636.0 346.4 L633.2 347.7 L632.0 350.2 L629.6 351.8 L628.1 354.1 L627.5 357.1 L625.0 358.6 L623.3 360.7 L622.2 363.3 L623.2 366.1 L622.7 368.7 L621.3 371.2 L622.3 374.1 L621.2 376.6 L621.0 379.3 L620.3 381.9 L617.8 383.5 L617.0 386.0 L616.4 388.7 L615.9 391.3 L614.0 393.3 L615.0 395.9 L615.3 398.6 L615.2 401.5 L617.4 403.8 L617.3 406.7 L617.6 409.4 L618.7 412.0 L616.3 413.5 L613.7 414.6 L611.7 416.6 L608.9 417.4 L606.9 419.6 L604.7 421.3 L601.6 421.9 L598.5 422.8 L600.3 424.6 L601.8 426.8 L603.8 428.4 L605.3 430.5 L607.4 432.1 L609.3 433.9 L611.0 435.8 L612.1 438.2 L614.0 440.0 L613.4 442.6 L613.4 445.3 L613.8 448.1 L612.2 450.6 L611.6 453.3 L611.2 455.9 L611.7 458.7 L610.4 461.2 L609.6 463.8 L608.9 466.5 L608.9 469.3 L608.6 472.0 L607.3 474.5 L607.0 477.3 L609.6 478.3 L611.4 480.6 L613.7 482.1 L616.0 483.6 L618.7 484.3 L616.6 486.2 L614.1 487.7 L612.6 490.2 L610.8 492.4 L608.5 494.1 L606.0 495.6 L604.7 498.3 L603.7 500.8 L603.7 503.3 L604.9 506.0 L603.7 508.4 L603.7 511.0 L603.2 513.5 L602.6 516.0 L603.6 518.6 L602.4 521.1 L603.5 523.7 L603.1 526.2 L602.3 528.7"/><path d="M795.0 253.0 L797.9 254.2 L800.0 256.6 L801.3 259.1 L803.2 261.0 L805.8 262.4 L807.2 264.8 L809.0 266.8 L811.6 267.3 L814.1 268.4 L816.7 269.3 L819.6 268.6 L822.2 269.1 L824.4 271.3 L827.2 271.3 L829.8 272.1 L832.2 273.7 L835.3 273.3 L837.6 275.1 L840.0 276.6 L842.9 276.6 L845.3 278.1 L847.5 279.6 L850.0 280.2 L852.9 279.2 L855.4 279.9 L857.5 281.6 L860.0 282.2 L862.3 283.9 L865.2 284.0 L868.3 283.5 L871.3 283.0 L874.4 283.2 L877.5 283.1 L877.0 279.9 L878.3 277.0 L881.0 276.9 L883.6 277.9 L886.8 278.6 L890.0 279.6 L893.2 280.5 L895.9 281.3 L898.3 282.6 L900.7 283.9 L902.8 285.7 L905.7 286.1 L908.6 286.2 L911.5 286.1 L914.2 287.5 L915.4 290.1 L917.6 291.9 L919.2 294.2 L921.1 296.2 L922.9 299.7 L925.6 298.0 L929.1 298.3 L931.6 296.2 L934.2 298.0 L937.7 297.8 L940.3 299.7 L942.4 298.4 L945.0 298.0 L947.3 297.0 L949.8 296.3 L951.7 294.5 L954.5 294.3 L957.2 295.2 L960.0 294.5"/><path d="M1082.4 70.0 L1079.8 71.3 L1077.9 73.2 L1077.2 76.3 L1074.7 77.6 L1074.7 80.4 L1072.4 82.5 L1071.8 85.1 L1071.0 87.7 L1070.9 90.5 L1069.7 92.9 L1068.0 94.8 L1066.4 96.9 L1065.0 98.9 L1064.1 101.5 L1062.0 103.1 L1063.4 106.0 L1064.6 109.0"/><path d="M1087.5 108.2 L1088.3 110.7 L1087.9 113.3 L1088.5 115.8 L1088.3 118.4 L1088.7 120.9 L1090.1 123.6 L1092.6 125.5 L1094.3 128.0 L1095.1 131.1 L1097.7 131.4 L1100.1 129.9 L1102.7 129.5 L1105.4 130.7 L1107.8 129.3 L1110.5 129.6 L1112.9 128.6 L1115.5 128.0 L1118.1 127.8 L1120.5 126.2 L1123.3 126.6 L1126.0 126.5 L1128.4 125.3 L1131.0 124.7"/><path d="M1095.1 131.1 L1095.4 133.7 L1095.4 136.3 L1094.5 138.7 L1094.7 141.3 L1093.8 143.8 L1095.4 146.1 L1095.5 148.9 L1095.3 151.7 L1096.3 154.2 L1097.7 156.6 L1096.0 158.9 L1095.6 161.9 L1093.8 164.1 L1092.6 166.7 L1090.2 168.4 L1087.8 169.8 L1085.3 171.2 L1082.4 171.8 L1084.2 174.1 L1084.2 177.3 L1085.6 179.7 L1087.5 182.0 L1089.0 184.4 L1090.9 186.3 L1093.6 187.3 L1095.1 189.7 L1094.4 192.4 L1092.8 194.7 L1091.6 197.1 L1090.4 199.6 L1090.0 202.4 L1090.6 205.3 L1093.3 207.1 L1093.6 210.1 L1095.1 212.6 L1097.6 213.3 L1100.2 213.2 L1102.8 212.9 L1105.3 213.8 L1107.9 213.3 L1110.3 215.3 L1112.9 215.5 L1115.5 215.1 L1115.0 217.6 L1115.2 220.2 L1113.6 222.6 L1113.9 225.3 L1112.9 227.7 L1112.6 230.3 L1112.9 232.9"/><path d="M779.6 618.3 L780.8 620.5 L782.5 622.5 L784.6 624.3 L786.9 625.9 L789.5 626.8 L790.8 629.3 L793.0 630.9 L795.2 632.5 L794.6 635.2 L796.6 637.6 L796.0 640.2 L795.3 642.9 L796.2 645.4 L795.9 648.0 L797.8 650.4 L797.3 653.1 L798.0 655.6 L797.7 658.2 L798.0 660.8 L797.6 663.6 L798.4 666.5 L797.7 669.3 L797.3 672.1 L796.6 674.9 L797.3 678.1 L799.4 680.6 L798.5 683.1 L799.4 685.9 L797.8 688.3 L798.0 691.0"/><path d="M1100.0 690.0 L1100.2 687.4 L1100.0 684.9 L1099.0 682.5 L1098.2 680.1 L1097.3 677.6 L1098.0 675.0 L1099.1 672.6 L1099.6 670.0 L1101.0 667.7 L1101.1 664.9 L1102.7 662.7 L1103.0 660.0 L1105.3 658.5 L1108.1 658.3 L1110.5 657.1 L1112.7 655.4 L1115.3 654.5 L1117.8 653.7 L1119.9 651.7 L1122.6 651.2 L1125.0 650.0 L1127.8 651.6 L1131.0 652.0"/></g>
<path d="M1067.1 109.5 L1074.7 103.1 L1087.5 101.8 L1091.3 105.6 L1082.4 108.2 L1072.2 110.7 Z" fill="#90cccb"/>
<g fill="#90cccb"><ellipse cx="1008" cy="603" rx="7" ry="2.5" transform="rotate(5 1008 603)"/><ellipse cx="974" cy="614" rx="5" ry="2" transform="rotate(-30 974 614)"/><ellipse cx="951" cy="623" rx="6" ry="2" transform="rotate(-15 951 623)"/><ellipse cx="1068" cy="655" rx="5" ry="2.5"/><ellipse cx="1062" cy="665" rx="3" ry="5"/><path d="M1131 640 Q1118 650 1112 660 Q1122 670 1131 665 Z"/></g>
<g fill="none" stroke="#b6abc9" stroke-width="0.9" stroke-linejoin="round" opacity="0.9"><path d="M728.3 386.4 L731.6 383.8 L735.2 381.6 L739.0 379.8 L742.3 377.1 L746.2 375.4 L749.4 372.6 L752.8 370.1 L756.6 368.3 L760.3 366.0 L764.0 363.5 L767.7 361.1 L771.6 359.0 L775.4 356.9 L779.2 354.7 L782.9 352.2 L787.0 350.5 L790.5 347.7 L794.4 345.8 L798.0 343.3 L801.9 341.1 L805.5 339.2 L809.4 338.0 L813.3 336.8 L817.0 335.1 L820.8 333.7 L824.5 332.1 L828.6 331.2 L832.6 330.8 L836.7 330.3 L840.8 330.3 L844.9 329.8 L849.2 331.0 L853.7 331.4 L858.0 332.7 L862.5 332.8 L866.9 333.8 L871.2 335.1 L875.5 336.0 L880.0 336.6"/><path d="M824.5 332.1 L821.1 329.7 L818.1 326.8 L814.7 324.3 L811.7 321.4 L808.7 318.5 L805.4 315.5 L802.0 312.7 L798.5 310.0 L795.1 307.2 L791.3 304.7 L787.3 302.7 L783.6 300.1 L779.6 298.0 L775.5 296.2 L771.8 293.5 L767.9 291.3 L765.1 288.5 L762.3 285.6 L759.2 283.0 L756.6 280.0"/><path d="M728.3 386.4 L728.8 382.3 L728.9 378.3 L728.9 374.2 L728.9 370.1 L729.4 366.0 L729.3 361.8 L729.3 357.6 L728.4 353.4 L728.5 349.2 L727.4 345.0 L727.5 340.8 L727.2 336.6 L727.2 332.3 L727.7 328.1 L728.1 323.9 L728.7 319.6 L728.6 315.4 L729.2 311.2 L729.0 306.9 L729.4 302.6 L728.2 298.2 L727.6 293.6 L726.9 289.0 L726.0 284.5 L724.9 280.0"/><path d="M728.3 388.7 L732.0 390.3 L735.2 392.9 L738.9 394.7 L742.6 396.3 L745.9 398.8 L749.5 400.6 L752.9 402.8 L756.6 404.5 L760.8 406.0 L765.0 407.6 L769.2 409.0 L773.6 410.0 L778.0 411.2 L781.9 413.4 L786.4 414.1 L790.6 415.8 L794.8 416.5 L799.0 417.5 L803.3 417.4 L807.6 417.9 L811.8 418.6 L816.1 418.9 L820.2 420.0 L824.5 420.4 L828.6 419.7 L832.6 419.0 L836.8 419.1 L840.8 418.3 L844.9 418.1"/><path d="M824.5 332.1 L822.7 336.3 L821.1 340.5 L818.8 344.5 L817.3 348.8 L815.1 352.8 L813.2 357.0 L813.0 361.1 L812.2 365.3 L812.4 369.5 L811.2 373.5 L811.7 377.8 L810.9 381.9 L813.6 385.2 L815.3 389.1 L817.3 392.8 L819.7 396.3 L822.0 399.8 L824.8 403.0 L826.8 406.8 L830.6 409.3 L834.2 412.1 L837.8 414.7 L841.5 417.4 L844.9 420.4"/><path d="M824.5 332.1 L828.3 330.0 L832.2 328.2 L835.9 326.1 L839.6 324.0 L843.5 322.3 L847.0 319.8 L851.2 318.4 L854.7 316.0 L858.5 314.0 L862.7 313.1 L867.1 313.3 L871.4 312.3 L875.7 312.6 L880.0 311.7"/><path d="M728.3 388.7 L729.7 393.1 L730.4 397.7 L730.9 402.3 L731.7 406.9 L732.6 411.4 L734.0 415.8 L733.9 419.9 L735.0 423.9 L735.3 427.9 L735.4 432.0 L735.7 436.0 L736.2 440.1"/><path d="M729.4 336.6 L733.7 336.1 L738.0 335.8 L742.3 335.4 L746.5 334.3 L750.8 333.7 L755.1 333.8 L759.3 332.9 L763.7 332.8 L767.9 332.1 L771.9 331.4 L775.6 329.7 L779.5 329.0 L783.4 327.9 L787.3 327.0 L791.3 326.7 L795.1 325.3 L799.4 326.0 L803.5 327.1 L807.8 327.9 L812.0 328.8 L816.2 329.7 L820.4 330.7 L824.5 332.1"/><path d="M700.0 298.1 L704.2 298.5 L708.4 299.7 L712.7 299.6 L716.8 301.0 L721.1 301.1 L725.2 302.1 L729.4 302.6 L733.4 301.3 L737.1 299.2 L741.1 298.0 L745.1 296.6 L748.9 294.7 L752.7 292.8 L756.6 291.3 L760.1 288.8 L764.1 287.2 L767.4 284.4 L771.3 282.6 L774.7 280.0"/><path d="M700.0 397.7 L704.1 396.5 L707.9 394.7 L712.3 394.3 L716.1 392.3 L720.3 391.4 L724.2 389.7 L728.3 388.7"/><path d="M700.0 370.6 L703.6 372.4 L707.0 374.7 L710.5 376.7 L714.2 378.4 L717.8 380.2 L721.5 382.0 L724.9 384.2 L728.3 386.4"/><path d="M728.3 388.7 L726.1 392.5 L723.9 396.3 L722.4 400.5 L719.6 404.0 L717.7 408.0 L715.6 411.9 L713.6 415.8 L710.0 417.8 L706.9 420.5 L703.2 422.4 L700.0 424.9"/><path d="M562.6 276.2 L565.9 279.1 L568.8 282.4 L572.2 285.1 L575.9 287.5 L578.8 290.8 L582.3 293.4 L585.3 296.6 L589.2 298.2 L592.5 300.8 L596.1 303.0 L600.0 304.5 L603.6 306.6 L607.5 308.2 L611.2 310.1 L614.7 312.4 L618.8 312.4 L623.0 312.4 L627.0 313.3 L631.2 312.9 L635.3 313.4 L639.4 313.2 L643.5 313.6 L647.6 313.9 L651.8 314.3 L655.9 314.3 L660.0 314.7 L662.2 318.5 L664.4 322.3 L666.8 326.0 L670.8 328.0 L674.5 330.6 L678.6 332.5 L682.2 335.2 L686.0 337.6 L689.8 340.0 L694.0 341.9 L696.6 344.9 L699.7 347.5 L702.3 350.5 L705.4 353.1 L708.3 355.8 L711.6 358.2 L714.5 360.9 L717.3 363.8 L720.0 366.8"/><path d="M662.3 289.8 L662.2 294.0 L661.8 298.1 L661.6 302.3 L660.8 306.4 L660.4 310.6 L660.0 314.7 L660.3 318.8 L660.3 322.8 L660.3 326.9 L660.6 330.9 L660.6 335.0 L660.5 339.1 L660.7 343.1 L660.5 347.2 L660.5 351.2 L660.8 355.3 L660.9 359.3 L661.1 363.4 L661.5 367.5 L661.1 371.5 L661.3 375.6 L661.8 379.7 L662.0 383.8 L661.9 387.8 L662.2 391.9 L662.3 396.0 L662.3 400.1"/><path d="M654.3 269.4 L655.9 273.5 L657.6 277.5 L659.3 281.6 L660.6 285.7 L662.3 289.8"/><path d="M662.3 289.8 L666.6 290.0 L670.8 291.6 L675.2 291.4 L679.5 292.3 L683.8 292.8 L688.1 293.4 L692.4 294.4 L696.6 295.4 L700.9 296.2 L705.3 296.6 L710.2 295.9 L715.1 295.4 L720.0 294.3"/><path d="M694.0 341.9 L695.6 337.8 L696.7 333.5 L698.0 329.3 L699.1 325.1 L700.3 320.8 L701.8 316.7 L703.0 312.4 L706.3 310.0 L710.0 308.3 L713.2 305.7 L716.8 303.7 L720.0 301.1"/><path d="M562.6 276.2 L566.2 274.0 L568.9 270.8 L572.2 268.3 L575.4 265.7 L578.7 263.2 L581.9 260.5 L585.3 258.1 L589.5 259.2 L593.6 261.0 L597.9 261.9 L602.1 263.4 L606.2 264.8 L610.6 265.6 L614.7 267.2 L619.1 267.0 L623.5 268.0 L627.9 267.7 L632.3 267.8 L636.7 268.5 L641.1 269.0 L645.5 269.3 L650.0 268.8 L654.3 269.4 L656.6 265.2 L659.1 261.2 L662.1 257.4 L664.0 253.0 L666.8 249.1 L669.8 246.0 L672.9 243.1 L675.8 240.0"/><path d="M562.6 326.0 L562.3 330.0 L561.9 334.0 L560.5 337.9 L560.5 341.9 L560.1 345.9 L558.8 349.7 L559.1 353.8 L558.1 357.7 L558.3 362.0 L559.2 366.2 L559.8 370.4 L560.1 374.6 L560.6 378.9 L560.7 383.1 L560.9 387.4 L561.8 391.6 L562.5 395.8 L562.6 400.1"/><path d="M585.3 337.4 L589.4 338.1 L593.6 338.3 L597.8 338.6 L601.9 339.8 L606.1 339.8 L610.2 340.5 L614.4 341.2 L618.4 342.4 L622.7 342.0 L626.8 342.6 L630.9 343.9 L635.1 344.1 L638.4 346.4 L641.8 348.7 L645.1 351.1 L648.4 353.4 L651.5 356.0 L654.4 358.9 L657.7 361.2 L661.1 363.4"/><path d="M619.2 380.4 L623.1 379.1 L626.8 377.0 L630.6 375.5 L634.4 374.0 L638.2 372.6 L642.1 371.1 L646.0 369.8 L649.6 367.8 L653.7 366.8 L657.3 364.8 L661.1 363.4 L665.1 364.4 L669.1 365.4 L672.9 366.9 L676.8 368.1 L680.8 368.8 L684.6 370.4 L688.6 371.3 L692.6 372.3 L696.5 373.4 L700.5 374.3 L704.2 376.1 L708.1 377.4 L712.1 378.3 L716.1 379.0 L720.0 380.4"/><path d="M583.0 362.3 L586.6 364.3 L590.0 366.4 L593.3 368.9 L596.4 371.6 L600.1 373.4 L603.4 375.8 L607.9 375.7 L612.4 374.9 L617.0 374.7 L621.5 374.5 L626.0 373.5 L630.6 373.6 L634.5 372.6 L638.2 371.1 L641.9 369.5 L645.7 368.2 L649.7 367.2 L653.6 366.2 L657.4 365.1 L661.1 363.4"/><path d="M562.6 276.2 L561.4 272.3 L559.4 268.8 L557.9 265.0 L556.2 261.3 L554.8 257.5 L553.6 253.6 L552.3 249.0 L550.5 244.5 L549.1 240.0"/><path d="M562.6 276.2 L562.2 280.2 L561.6 284.2 L561.0 288.1 L560.3 292.1 L559.8 296.0 L559.1 300.0 L558.4 303.9 L558.1 307.9 L559.2 312.5 L560.2 317.0 L561.2 321.6 L562.6 326.0"/><path d="M614.7 312.4 L612.5 316.3 L609.8 319.7 L607.3 323.4 L604.3 326.7 L602.0 330.4 L599.2 333.8 L596.6 337.4 L594.3 340.7 L592.7 344.5 L591.2 348.3 L589.0 351.7 L586.9 355.1 L585.3 358.9 L583.0 362.3 L582.4 366.4 L582.6 370.7 L582.4 374.9 L582.1 379.1 L582.0 383.3 L581.6 387.5 L581.0 391.6 L580.8 395.8 L580.8 400.1"/><path d="M540.0 467.9 L544.3 467.6 L548.5 466.5 L552.8 466.4 L557.0 466.1 L561.3 465.3 L565.4 464.2 L569.8 464.3 L574.0 463.4 L578.5 462.7 L582.9 461.2 L587.4 460.2 L592.0 459.5 L596.6 458.9 L600.6 457.7 L604.8 457.7 L608.8 456.8 L613.0 456.6 L617.0 455.5 L621.0 455.0 L625.1 454.8 L629.2 454.4 L633.3 455.0 L637.4 454.3 L641.4 454.1 L645.5 453.5 L649.6 453.2 L653.7 453.7 L657.7 453.2 L662.2 453.9 L666.8 454.0 L671.3 455.0 L675.8 455.6 L680.4 455.8 L684.9 456.6 L689.3 456.6 L693.7 456.2 L698.1 456.2 L702.4 455.5 L706.9 455.6 L711.2 454.7 L715.6 454.2 L720.0 454.3"/><path d="M553.6 467.9 L556.2 470.9 L558.6 474.2 L561.5 477.0 L564.1 480.1 L567.1 482.7 L569.4 486.0 L570.3 490.5 L570.5 495.2 L571.8 499.6 L572.0 504.2 L572.9 508.7 L574.0 513.2 L574.0 517.3 L574.8 521.4 L575.5 525.4 L576.2 529.5 L576.2 533.6"/><path d="M650.9 522.3 L646.8 522.7 L642.6 522.7 L638.5 523.2 L634.4 524.2 L630.2 523.8 L626.0 524.5 L621.9 524.7 L617.7 525.4 L613.6 525.4 L609.4 526.2 L605.3 526.2 L601.1 526.8"/><path d="M650.9 522.3 L655.2 521.9 L659.3 520.9 L663.3 519.7 L667.5 519.0 L671.7 518.4 L675.8 517.7 L680.4 517.7 L684.9 517.0 L689.4 516.3 L694.0 516.4 L698.5 515.5 L702.7 514.7 L707.1 514.9 L711.4 514.5 L715.7 514.1 L720.0 513.2"/><path d="M650.9 522.3 L649.4 526.4 L648.2 530.7 L646.4 534.7 L644.6 538.8 L643.1 542.9 L641.9 547.2"/><path d="M637.4 400.0 L637.1 404.2 L637.5 408.4 L636.9 412.5 L637.0 416.7 L637.3 420.9 L637.2 425.1 L637.1 429.3 L637.4 433.4 L636.9 437.6 L637.0 441.8 L637.0 446.0 L637.2 450.2 L637.4 454.3 L637.8 458.4 L638.4 462.5 L640.1 466.3 L640.2 470.5 L640.8 474.5 L642.3 478.4 L642.4 482.6 L643.6 486.5 L644.1 490.6 L644.6 494.6 L646.2 498.4 L646.7 502.4 L647.5 506.4 L648.3 510.4 L649.4 514.3 L650.5 518.2 L650.9 522.3"/><path d="M657.7 400.0 L657.4 404.2 L657.3 408.4 L657.4 412.6 L657.4 416.8 L657.2 421.0 L657.5 425.2 L657.7 429.4 L657.3 434.2 L658.0 438.9 L657.4 443.7 L657.7 448.4 L657.7 453.2"/><path d="M675.8 486.0 L679.0 488.5 L682.1 491.1 L685.2 493.6 L687.7 496.9 L691.1 499.1 L694.0 501.9 L698.3 500.9 L702.7 500.8 L707.0 499.5 L711.3 498.9 L715.6 497.7 L720.0 497.4"/><path d="M567.2 400.0 L567.9 404.6 L568.9 409.1 L569.9 413.6 L570.5 418.2 L571.7 422.6 L570.2 426.4 L569.0 430.3 L566.9 433.8 L565.9 437.8 L564.0 441.4 L562.4 445.2 L561.5 449.2 L559.5 452.8 L557.7 456.4 L556.4 460.3 L555.3 464.2 L553.6 467.9"/><path d="M596.6 400.0 L596.0 404.6 L594.7 409.0 L594.0 413.5 L593.2 418.0 L592.8 422.6 L592.1 427.2 L592.7 431.1 L592.8 435.1 L593.3 439.1 L593.9 443.1 L595.1 447.0 L595.5 450.9 L595.7 455.0 L596.6 458.9"/><path d="M650.9 522.3 L651.8 526.4 L652.4 530.7 L653.7 534.8 L654.4 539.0 L655.2 543.2 L655.1 547.5 L656.7 551.6 L657.4 555.8 L657.7 560.1"/><path d="M694.0 501.9 L693.2 506.1 L692.8 510.4 L692.0 514.6 L692.1 518.9 L690.9 523.1 L690.3 527.3 L690.2 531.6 L689.4 535.8 L691.3 539.8 L692.3 544.0 L693.7 548.1 L695.2 552.1 L696.8 556.1 L698.5 560.1"/><path d="M780.0 44.7 L783.0 47.4 L786.0 50.1 L789.0 52.7 L792.3 55.1 L795.8 57.1 L798.9 59.7 L801.8 62.5 L805.6 65.1 L809.5 67.5 L813.7 69.4 L817.6 71.8 L821.8 73.7 L825.5 76.4 L829.4 78.9 L833.2 81.6 L837.4 83.6 L841.5 85.8 L845.3 88.3 L849.3 90.7 L853.5 92.7 L857.2 95.4 L861.0 98.2 L865.1 100.2 L865.2 104.8 L864.3 109.4 L863.8 114.0 L863.6 118.6 L863.6 123.3 L863.2 127.9 L863.2 132.1 L862.9 136.2 L862.0 140.3 L862.1 144.5 L862.0 148.7 L861.2 152.8 L861.2 157.0"/><path d="M825.5 76.4 L828.2 72.6 L829.9 68.3 L832.9 64.6 L834.7 60.3 L837.4 56.6 L838.7 52.5 L840.9 48.8 L841.9 44.6 L843.8 40.8 L845.3 36.8 L848.9 33.9 L852.0 30.5 L855.5 27.6 L859.2 24.9 L861.0 20.9 L863.2 17.0"/><path d="M845.3 36.8 L849.2 38.2 L852.7 40.6 L856.7 41.8 L860.5 43.5 L864.2 45.2 L867.8 47.2 L871.7 48.7 L875.2 51.1 L879.0 52.6 L883.1 54.4 L886.8 56.9 L891.1 58.3 L894.8 60.6 L898.8 62.5 L903.7 61.6 L908.7 61.9 L913.6 60.7 L918.6 60.6 L922.8 60.5 L926.9 61.3 L931.0 61.1 L935.2 61.5 L939.3 62.0 L943.4 62.2 L947.6 62.2 L951.7 62.4 L955.8 62.6 L960.0 62.5"/><path d="M780.0 110.1 L784.3 110.1 L788.5 109.0 L792.9 109.5 L797.1 108.6 L801.5 108.5 L805.7 108.1 L810.0 107.8 L814.2 107.7 L818.5 107.1 L822.7 106.8 L826.9 106.4 L831.2 106.7 L835.4 106.1 L839.4 105.2 L843.4 104.7 L847.3 103.6 L851.3 102.8 L855.2 101.5 L859.2 101.0 L863.2 100.2"/><path d="M835.4 106.1 L835.3 110.4 L835.2 114.6 L835.6 118.8 L835.2 123.1 L835.2 127.3 L835.7 131.6 L835.4 135.8 L834.9 140.0 L834.6 144.3 L834.6 148.6 L834.1 152.8 L833.5 157.0"/><path d="M879.0 52.6 L878.5 56.6 L877.7 60.6 L876.6 64.4 L876.2 68.5 L875.7 72.4 L875.0 76.4 L873.8 80.3 L873.6 84.4 L872.3 88.3 L871.4 92.3 L870.0 96.2 L869.2 100.2 L867.8 104.0 L867.1 108.1"/><path d="M898.8 62.5 L898.7 66.9 L899.6 71.3 L900.1 75.6 L900.4 80.0 L901.0 84.3 L901.4 88.7 L902.1 93.0 L902.1 97.4 L902.6 101.7 L902.8 106.1 L902.0 110.3 L901.9 114.6 L900.9 118.8 L900.4 123.1 L900.4 127.4 L899.7 131.6 L898.8 135.8 L900.6 140.0 L901.6 144.4 L903.9 148.4 L904.9 152.8 L906.7 157.0"/><path d="M780.0 66.5 L784.4 66.2 L788.8 65.2 L793.1 64.3 L797.4 63.2 L801.8 62.5"/><path d="M801.8 62.5 L801.2 66.6 L799.8 70.5 L798.9 74.4 L797.5 78.3 L796.4 82.2 L795.8 86.3 L794.4 90.9 L792.7 95.4 L791.9 100.2"/><path d="M918.6 60.6 L918.8 64.6 L919.8 68.5 L920.2 72.5 L921.5 76.3 L921.7 80.4 L922.2 84.3 L923.0 88.3 L923.4 92.3 L923.9 96.2 L924.4 100.2 L925.7 104.1 L925.7 108.1 L926.5 112.0 L926.3 116.1 L926.1 120.2 L925.0 124.3 L924.9 128.4 L924.8 132.5 L924.8 136.6 L923.5 140.6 L924.1 144.8 L923.6 148.9 L923.3 152.9 L922.6 157.0"/><path d="M865.1 100.2 L868.9 101.9 L872.8 103.3 L876.2 105.8 L880.0 107.5 L883.6 109.4 L887.5 110.8 L891.5 112.2 L895.3 113.8 L898.8 116.0 L902.9 115.7 L907.0 116.4 L911.0 116.2 L915.1 116.1 L919.2 116.4 L923.3 116.5 L927.4 115.9 L931.4 116.1 L935.5 115.8 L939.6 116.4 L943.7 116.0 L947.8 116.3 L951.8 115.8 L955.9 115.9 L960.0 116.0"/><path d="M834.0 181.9 L836.4 185.1 L839.2 187.9 L841.9 190.9 L844.7 193.8 L847.5 196.6 L850.6 199.5 L853.8 202.2 L857.2 204.6 L860.0 207.7 L863.4 210.2 L866.9 212.2 L870.6 213.8 L874.4 215.2 L877.8 217.5 L881.5 219.2 L885.3 220.7 L888.7 223.0 L892.2 225.1 L896.0 226.6 L899.6 228.3 L900.7 233.0 L902.5 237.4 L904.1 241.9"/><path d="M834.0 181.9 L837.6 179.8 L841.7 178.4 L845.3 176.2 L849.8 175.1 L854.4 174.5 L858.9 173.6 L863.4 172.7 L867.9 171.7 L872.1 171.2 L876.3 171.1 L880.3 169.8 L884.6 170.0 L888.7 169.2 L892.9 169.0 L897.0 168.0 L901.1 167.3 L905.3 167.2 L909.2 165.9 L912.9 164.3 L916.9 163.2 L920.4 161.2 L924.3 159.9 L928.4 159.1 L932.0 157.1 L935.8 155.8 L939.8 154.1 L943.8 152.9 L948.0 151.9 L951.7 149.7 L955.9 148.7 L960.0 147.3 L964.0 146.0 L968.0 144.4 L971.8 142.5 L975.9 141.1 L980.0 140.0"/><path d="M905.3 140.0 L905.6 144.5 L905.2 149.1 L905.8 153.6 L906.5 158.1 L906.7 162.6 L906.4 167.2 L906.8 171.2 L907.0 175.3 L906.9 179.4 L907.0 183.5 L906.5 187.6 L907.1 191.6 L907.2 195.7 L907.5 199.8 L907.0 203.9 L907.5 207.9 L905.3 212.3 L903.9 217.1 L901.3 221.4 L899.6 226.0 L900.8 230.0 L902.2 233.9 L903.0 237.9 L904.1 241.9"/><path d="M904.1 241.9 L908.0 243.4 L912.0 245.0 L915.8 246.8 L919.7 248.3 L923.6 249.9 L927.4 251.6 L931.3 253.2 L935.3 254.3 L938.9 256.2 L943.0 257.0 L946.7 258.8 L950.7 259.7 L954.5 261.2 L958.5 262.3 L962.3 260.4 L965.7 257.8 L969.4 255.8 L972.8 253.2 L976.2 250.6 L980.0 248.7"/><path d="M904.1 241.9 L905.2 246.5 L907.3 250.8 L908.0 255.5 L909.5 260.0 L910.9 264.5 L910.3 268.9 L910.5 273.4 L910.1 277.9 L910.0 282.3 L909.2 286.7 L909.0 291.2 L908.5 295.6 L908.7 300.1"/><path d="M904.1 241.9 L900.5 244.1 L897.0 246.5 L893.1 248.4 L889.6 250.8 L885.8 252.8 L882.6 255.7 L878.6 257.4 L875.4 260.4 L871.7 262.4 L867.9 264.5 L864.0 263.1 L860.2 261.2 L856.1 260.1 L852.3 258.3 L848.3 256.9 L844.6 254.9 L840.8 253.2 L836.8 252.3 L833.0 251.3 L829.0 250.7 L825.3 249.2 L821.4 248.1 L817.5 247.1 L813.6 246.4 L809.0 246.7 L804.5 248.0 L800.0 248.7"/><path d="M834.0 181.9 L831.0 185.4 L828.1 188.8 L824.9 192.1 L823.7 196.1 L823.1 200.4 L821.6 204.4 L820.6 208.5 L819.9 212.7 L818.7 216.8 L817.6 220.9 L817.0 225.1 L816.1 229.2 L815.0 233.3 L813.6 237.4 L810.3 240.1 L807.3 243.1 L804.5 246.4"/><path d="M845.3 176.2 L846.2 180.7 L846.0 185.3 L846.3 189.8 L847.5 194.3 L847.5 198.9 L846.5 203.0 L846.4 207.2 L846.3 211.4 L845.3 215.6 L844.9 219.8 L844.5 224.0 L844.1 228.1 L843.4 232.3 L843.2 236.5 L842.2 240.6 L842.0 244.9 L840.9 249.0 L840.8 253.2"/><path d="M904.1 241.9 L907.9 239.2 L911.7 236.5 L915.4 233.9 L919.0 230.9 L923.2 228.9 L926.8 226.0 L929.6 222.5 L932.8 219.2 L935.7 215.7 L938.7 212.3 L941.7 208.9 L944.9 205.7"/><path d="M963.0 140.0 L963.2 144.2 L963.4 148.5 L963.0 152.7 L963.0 157.0 L963.5 161.2 L962.7 165.5 L962.7 169.7 L963.0 174.0 L962.6 178.3 L962.0 182.6 L961.3 186.8 L961.5 191.2 L960.5 195.4 L960.3 199.8 L959.5 204.0 L959.1 208.3 L958.6 212.6 L958.5 217.0 L961.1 220.3 L962.6 224.5 L965.6 227.7 L967.2 231.7 L969.8 235.1 L974.8 236.4 L980.0 237.4"/><path d="M1023.8 138.7 L1023.7 134.7 L1022.8 130.7 L1023.4 126.6 L1022.6 122.6 L1022.0 118.5 L1021.8 114.5 L1021.8 110.4 L1021.3 106.4 L1020.8 102.4 L1020.6 98.3 L1020.2 94.3 L1020.7 90.2 L1020.4 86.1 L1020.1 82.1 L1019.6 78.1 L1018.7 74.1 L1018.7 70.0"/><path d="M1023.8 138.7 L1027.5 136.5 L1031.5 135.2 L1035.3 133.3 L1039.3 132.0 L1043.0 130.0 L1046.6 127.8 L1050.4 125.9 L1054.5 124.7 L1058.2 122.7 L1062.0 120.9 L1064.8 117.9 L1067.4 114.8 L1069.7 111.4 L1072.2 108.2"/><path d="M1023.8 138.7 L1028.0 139.1 L1032.0 140.4 L1036.2 140.7 L1040.4 141.3 L1044.5 142.1 L1048.6 142.7 L1052.8 143.0 L1056.9 143.8 L1061.0 144.8 L1065.1 145.6 L1069.0 147.3 L1073.3 147.5 L1077.2 149.4 L1081.4 149.7 L1085.4 151.2 L1089.4 152.2 L1093.6 152.8 L1097.7 154.0 L1101.7 153.1 L1105.8 152.2 L1109.8 151.3 L1113.8 150.1 L1117.9 149.6 L1122.0 148.6 L1125.9 147.2 L1130.0 146.4"/><path d="M1023.8 138.7 L1023.7 142.7 L1022.8 146.7 L1023.4 150.8 L1023.3 154.8 L1022.3 158.7 L1022.3 162.7 L1021.8 166.7 L1021.6 170.7 L1021.9 174.8 L1021.4 178.7 L1021.4 182.8 L1021.2 186.8 L1020.9 190.8 L1020.8 194.8 L1020.6 198.8 L1020.2 202.8 L1019.5 206.7 L1019.5 210.8 L1018.7 214.7 L1018.8 218.7 L1018.7 222.7 L1018.7 227.3 L1018.5 231.8 L1019.1 236.4 L1018.7 240.9 L1018.5 245.4 L1018.7 250.0"/><path d="M1023.8 138.7 L1019.6 138.6 L1015.5 138.0 L1011.3 137.7 L1007.1 137.4 L1002.9 137.1 L998.7 136.8 L994.5 136.7 L990.4 135.8 L986.2 135.0 L982.0 134.8 L977.8 135.1 L973.6 134.6 L969.5 134.0 L965.3 133.6 L961.3 132.0 L957.8 129.4 L953.9 127.7 L950.0 126.0"/><path d="M950.0 108.2 L954.3 107.1 L958.6 106.0 L962.9 104.8 L967.1 103.5 L971.2 101.8 L975.5 100.5 L979.5 100.9 L983.5 101.3 L987.5 101.4 L991.6 101.0 L995.6 101.6 L999.6 102.1 L1003.7 101.5 L1007.7 102.3 L1011.7 102.2 L1015.8 102.8 L1019.8 103.0 L1023.8 103.1 L1028.1 104.3 L1032.5 104.7 L1036.8 105.3 L1041.1 106.3 L1045.5 107.0 L1049.8 107.5 L1054.2 108.1 L1058.4 109.4 L1062.8 109.8 L1067.1 110.7"/><path d="M960.2 70.0 L960.2 74.0 L960.3 78.0 L960.5 82.1 L960.7 86.1 L961.0 90.1 L960.6 94.1 L960.9 98.1 L960.8 102.2 L961.0 106.2 L961.4 110.2 L962.1 114.2 L961.6 118.2 L961.8 122.3 L962.1 126.3 L961.8 130.3 L961.9 134.3 L962.6 138.3 L962.5 142.4 L962.7 146.4 L963.5 150.4 L963.3 154.5 L963.6 158.6 L964.1 162.6 L964.4 166.7 L964.7 170.8 L964.5 174.9 L964.7 179.0 L965.4 183.0 L965.3 187.1 L964.7 191.1 L963.2 194.9 L962.9 199.0 L962.1 203.0 L960.6 206.8 L960.3 210.9 L959.0 214.8 L958.5 218.8 L957.6 222.7 L956.8 226.7 L955.2 230.5 L954.6 234.5 L953.6 238.4 L951.8 242.1 L951.5 246.2 L950.0 250.0"/><path d="M1018.7 222.7 L1023.0 223.1 L1027.2 222.7 L1031.5 222.6 L1035.7 222.8 L1040.0 222.6 L1044.2 223.0 L1048.4 223.2 L1052.7 222.5 L1056.9 222.7 L1060.8 224.0 L1064.8 225.3 L1068.9 225.7 L1072.6 227.7 L1076.8 228.3 L1080.8 229.3 L1084.5 231.0 L1088.6 231.8 L1092.6 232.9 L1096.7 232.2 L1100.9 231.9 L1105.0 231.3 L1109.2 230.4 L1113.3 230.0 L1117.5 229.6 L1121.7 228.9 L1125.8 228.0 L1130.0 227.8"/><path d="M1018.7 222.7 L1015.4 225.1 L1012.6 228.2 L1009.5 230.8 L1006.6 233.7 L1003.7 236.6 L1000.5 239.2 L997.3 241.7 L994.6 244.9 L990.9 246.9 L988.2 250.0"/><path d="M1056.9 143.8 L1056.7 147.9 L1056.0 152.0 L1055.6 156.1 L1055.3 160.2 L1054.3 164.2 L1054.3 168.3 L1053.2 172.3 L1052.7 176.4 L1052.8 180.6 L1051.8 184.6 L1051.2 188.8 L1050.7 193.0 L1049.8 197.3 L1049.2 201.5 L1049.0 205.8 L1048.9 210.1 L1047.6 214.2 L1047.7 218.6 L1046.7 222.7"/><path d="M1097.7 154.0 L1099.0 158.0 L1100.9 161.9 L1102.7 165.7 L1103.9 169.9 L1105.4 173.8 L1107.2 177.7 L1108.7 181.7 L1110.3 185.6 L1112.4 189.3 L1113.5 193.5 L1115.5 197.3 L1119.0 200.0 L1122.9 202.2 L1126.6 204.6 L1130.0 207.5"/><path d="M736.2 400.0 L736.7 404.5 L735.8 409.1 L736.0 413.6 L736.1 418.1 L735.8 422.6 L736.2 427.2 L737.4 431.2 L738.2 435.3 L738.9 439.4 L740.3 443.4 L740.8 447.5 L740.3 452.1 L739.1 456.6 L738.1 461.1 L737.8 465.7 L737.5 470.3 L736.2 474.7 L734.8 479.0 L732.7 482.9 L730.4 486.8 L729.3 491.2 L727.2 495.1 L727.7 499.3 L728.0 503.6 L727.7 507.8 L728.0 512.1 L728.9 516.3 L729.0 520.6 L728.8 524.8 L729.4 529.0 L730.1 533.5 L730.7 537.9 L731.0 542.4 L731.7 546.8 L733.1 551.1 L733.6 555.6 L734.0 560.1"/><path d="M740.8 447.5 L744.9 448.3 L749.1 448.2 L753.2 448.3 L757.3 449.1 L761.5 449.2 L765.6 449.9 L769.8 450.3 L774.0 450.2 L778.1 451.3 L782.3 451.3 L786.4 451.5 L790.6 452.1 L794.5 453.1 L798.4 454.1 L802.4 454.6 L806.5 455.2 L810.3 456.5 L814.3 457.1 L818.2 458.4 L822.3 458.9 L826.7 458.8 L831.1 459.4 L835.4 459.9 L839.9 459.4 L844.3 460.4 L848.7 460.5 L853.1 460.7 L857.5 461.1 L861.9 461.1"/><path d="M790.6 452.1 L792.2 455.9 L793.9 459.7 L795.1 463.7 L797.0 467.4 L798.4 471.3 L799.9 475.2 L801.3 479.1 L803.6 482.7 L804.5 486.8 L806.4 490.6 L810.0 492.9 L813.2 495.8 L816.4 498.7 L820.2 500.8 L823.2 504.1 L826.8 506.4"/><path d="M700.0 452.1 L704.1 452.1 L708.1 451.0 L712.2 450.9 L716.3 450.3 L720.4 449.8 L724.4 449.2 L728.5 449.1 L732.6 448.2 L736.7 448.1 L740.8 447.5"/><path d="M700.0 495.1 L704.5 494.8 L709.1 495.2 L713.6 494.8 L718.1 495.3 L722.6 495.2 L727.2 495.1 L731.3 494.1 L735.6 494.1 L739.8 493.2 L744.0 492.5 L748.2 491.8 L752.4 491.4 L756.6 490.6 L760.8 492.0 L765.0 493.2 L769.3 494.2 L773.5 495.5 L777.9 496.0 L782.2 497.0 L786.3 498.4 L790.6 499.6 L794.6 500.2 L798.6 501.2 L802.6 502.1 L806.7 502.3 L810.7 503.4 L814.7 503.9 L818.8 504.8 L822.8 505.6 L826.8 506.4"/><path d="M700.0 529.0 L704.2 528.7 L708.4 528.9 L712.6 528.6 L716.8 528.8 L721.0 529.2 L725.2 528.8 L729.4 529.0 L733.4 528.2 L737.2 527.0 L740.8 525.2 L744.9 524.9 L748.7 523.4 L752.4 521.8 L756.3 521.0 L760.2 519.9 L764.1 518.9 L767.9 517.7 L772.5 516.9 L777.1 516.3 L781.6 515.3 L786.1 514.3 L790.6 513.2"/><path d="M729.4 529.0 L732.4 532.4 L735.5 535.6 L738.9 538.6 L742.2 541.6 L745.3 544.9"/><path d="M822.3 458.9 L825.1 462.4 L827.9 465.9 L830.2 469.9 L832.8 473.6 L835.8 477.0"/><path d="M774.7 400.0 L775.5 404.1 L776.7 408.1 L778.6 411.9 L780.0 415.9 L780.8 420.0 L781.9 424.1 L783.1 428.1 L784.7 432.0 L785.6 436.1 L786.8 440.1 L788.4 444.0 L789.6 448.0 L790.6 452.1"/><path d="M700.0 409.1 L704.2 408.8 L708.2 407.8 L712.3 406.7 L716.5 406.7 L720.6 406.1 L724.7 405.2 L728.8 404.7 L732.9 403.9 L737.0 403.4 L741.1 402.7 L745.3 402.3 L749.3 402.3 L753.4 402.6 L757.4 402.3 L761.5 402.8 L765.5 403.4 L769.5 403.0 L773.6 403.3 L777.6 403.7 L781.7 404.1 L785.7 403.7 L789.7 404.2 L793.8 404.6 L797.8 404.0 L801.9 404.5 L806.2 404.8 L810.4 405.8 L814.8 405.8 L819.1 406.3 L823.4 406.5 L827.7 407.3 L831.9 408.2 L836.3 408.3 L840.6 408.7 L844.9 409.1"/><path d="M801.9 404.5 L802.3 409.0 L802.3 413.6 L803.5 418.1 L803.7 422.6 L804.1 427.1 L804.1 431.7"/><path d="M656.6 587.7 L655.4 592.0 L653.7 596.1 L652.2 600.2 L651.1 604.5 L650.1 608.8 L648.5 612.9 L647.2 617.2 L645.6 621.0 L644.0 624.7 L642.7 628.7 L641.1 632.4 L639.4 636.2 L638.2 640.1 L636.6 643.9 L635.4 647.8 L633.4 651.8 L631.3 655.6 L629.2 659.4 L627.2 663.4 L625.4 667.4 L623.6 671.4 L621.7 675.1 L619.9 678.9 L618.1 682.7 L616.2 686.4 L614.1 690.0"/><path d="M656.6 587.7 L659.8 590.9 L662.4 594.6 L665.1 598.3 L667.6 602.1 L670.7 605.4 L672.0 609.8 L673.6 614.1 L675.9 618.2 L677.0 622.7 L678.8 626.9 L680.2 631.3 L684.3 630.7 L688.4 630.3 L692.5 630.0 L696.7 630.4 L700.8 629.5 L704.9 629.8 L709.0 629.2 L713.2 628.9 L717.2 628.2 L721.3 628.2 L725.3 627.9 L729.4 627.6 L733.4 627.7 L737.4 627.1 L741.5 626.6 L745.9 626.6 L750.3 627.4 L754.7 627.5 L759.1 628.1 L763.6 627.6 L768.0 628.4 L772.4 629.0 L776.8 628.9 L781.1 627.4 L785.0 625.2 L789.1 623.4 L793.4 621.9 L797.6 621.8 L801.9 621.3 L806.1 620.9 L810.3 619.6 L814.6 619.7 L818.8 619.0 L823.1 618.5 L827.3 618.4 L831.6 618.0 L835.8 617.2 L840.1 616.8 L844.4 616.4 L848.6 615.6 L852.9 615.0 L857.1 614.0 L861.4 613.7 L865.7 612.7 L870.0 612.4"/><path d="M635.4 647.8 L639.2 649.8 L643.0 651.9 L647.2 653.3 L650.9 655.5 L654.9 657.1 L658.7 659.2 L663.0 660.3 L667.0 662.1 L670.7 664.3 L675.0 663.7 L679.3 663.5 L683.6 663.4 L687.9 662.8 L692.2 662.1 L696.5 661.9 L700.8 661.4 L705.0 660.5 L709.3 660.7 L713.6 659.7 L717.9 659.6 L722.1 658.2 L726.1 656.4 L730.0 654.4 L734.0 652.8 L738.0 651.0 L742.1 649.4 L746.2 647.8 L750.3 645.8 L754.0 643.4 L757.9 641.0 L761.5 638.3 L765.5 636.3 L769.1 633.5 L772.9 631.1 L776.8 628.9"/><path d="M670.7 664.3 L669.3 668.5 L668.7 673.0 L667.2 677.2 L666.3 681.5 L664.5 685.6 L663.7 690.0"/><path d="M717.9 659.6 L719.0 663.9 L719.5 668.3 L720.3 672.6 L720.6 677.0 L720.9 681.4 L721.6 685.7 L722.6 690.0"/><path d="M860.0 583.4 L864.1 582.9 L868.1 582.1 L872.1 581.7 L876.1 580.6 L880.2 580.2 L884.3 580.1 L888.2 578.7 L892.3 578.5 L896.3 577.6 L900.5 577.5 L904.5 576.9 L908.5 575.9 L912.6 575.9 L916.6 574.9 L920.0 572.5 L923.9 571.0 L927.4 568.8 L931.1 566.9 L934.8 565.0 L938.3 562.8 L942.0 560.7 L945.3 558.3 L949.3 556.8 L952.6 554.3 L956.2 552.3 L960.3 553.0 L964.4 553.7 L968.6 553.5 L972.7 554.5 L976.8 555.2 L981.0 555.2 L985.1 555.6 L989.2 556.5 L993.3 556.9 L997.4 557.3 L1001.5 557.9 L1005.6 558.3 L1009.6 558.4 L1013.7 559.0 L1017.7 559.6 L1021.8 559.7 L1025.8 560.2 L1029.9 560.4 L1033.9 560.9 L1037.9 561.6 L1042.0 561.7 L1046.0 561.9 L1050.1 562.6 L1054.1 562.9 L1058.1 563.6 L1062.1 563.2 L1066.1 562.4 L1070.1 562.1 L1074.1 561.6 L1078.1 560.9 L1082.1 560.9 L1086.1 560.0 L1090.1 559.7 L1094.0 559.0 L1098.0 558.7 L1102.1 558.3 L1106.1 558.0 L1110.1 557.9 L1114.1 557.4 L1118.1 556.6 L1122.0 556.0 L1126.1 555.8 L1130.0 555.1"/><path d="M956.2 552.3 L955.8 556.5 L955.5 560.8 L955.2 565.1 L954.1 569.2 L954.0 573.5 L953.0 577.7 L952.9 582.0 L952.6 586.2 L951.7 590.5 L951.4 594.7 L951.4 599.0 L950.6 603.2 L949.8 607.3 L949.6 611.5 L950.2 615.7 L949.8 619.8 L949.5 623.9 L948.9 628.0 L948.5 632.2 L948.1 636.3 L948.6 640.5 L948.4 644.6 L947.5 648.7 L947.8 652.9 L947.5 657.0 L946.5 661.1 L946.6 665.3 L946.2 669.4 L945.7 673.5 L945.6 677.7 L945.3 681.8 L945.2 686.0 L944.9 690.1"/><path d="M1001.5 557.9 L1002.9 561.7 L1004.5 565.4 L1006.1 569.1 L1007.5 572.9 L1008.5 576.8 L1010.0 580.6 L1011.9 584.2 L1012.5 588.2 L1013.8 592.1 L1015.9 595.6 L1016.6 599.6 L1018.5 603.2 L1019.1 607.2 L1020.5 611.0 L1020.8 615.1 L1021.8 619.0 L1022.2 623.0 L1023.1 626.9 L1024.2 630.8 L1025.0 634.8 L1025.3 638.8 L1026.6 642.6 L1026.7 646.7 L1027.7 650.6 L1028.6 654.6 L1029.5 658.5 L1030.1 662.5 L1031.2 666.3 L1031.3 670.4 L1032.6 674.3 L1032.7 678.4 L1033.9 682.2 L1035.2 686.1 L1035.5 690.1"/><path d="M659.6 330.0 L659.4 334.5 L660.3 338.9 L660.4 343.4 L660.4 347.8 L660.9 352.3 L661.1 356.7 L661.2 361.2 L661.6 365.6 L662.4 370.9 L662.1 376.2 L662.6 381.5 L660.0 386.0 L658.2 390.9 L655.6 395.3 L653.3 398.9 L650.9 402.5 L648.3 405.9 L645.8 409.4 L643.8 413.2 L641.9 417.0 L640.9 421.2 L638.7 424.9 L637.6 429.1 L635.8 433.0 L636.4 437.1 L635.8 441.2 L636.6 445.3 L637.0 449.4 L637.0 453.5 L636.7 457.7 L637.5 461.8 L638.0 465.9 L637.8 470.0"/><path d="M620.0 379.5 L624.1 377.8 L627.8 375.3 L632.0 373.7 L635.7 371.2 L639.8 369.6 L644.1 368.3 L648.4 367.6 L652.9 367.4 L657.3 366.8 L661.6 365.6 L666.0 365.8 L670.5 366.5 L675.0 366.4 L679.4 366.6 L683.3 368.9 L687.2 371.3 L691.3 373.2 L695.2 375.5 L699.8 377.2 L704.1 379.7 L708.4 381.9 L713.1 383.5 L718.1 384.3 L723.1 385.7 L727.9 387.4"/><path d="M727.9 387.4 L726.7 383.0 L725.3 378.6 L724.2 374.1 L723.0 369.6 L720.1 365.9 L717.8 361.8 L715.6 357.7 L713.1 353.8 L709.5 350.0 L706.2 346.1 L703.2 341.9 L702.0 337.9 L700.7 333.9 L699.2 330.0"/><path d="M727.9 387.4 L728.6 382.8 L729.1 378.2 L729.9 373.6 L730.2 369.0 L730.3 364.3 L730.9 359.7 L730.6 354.7 L729.9 349.8 L729.6 344.8 L728.9 339.9 L728.2 335.0 L727.9 330.0"/><path d="M727.9 387.4 L731.8 385.2 L735.5 382.7 L738.9 379.7 L742.8 377.5 L746.2 374.6 L748.9 371.0 L752.6 368.3 L755.5 364.9 L758.6 361.7 L762.8 359.9 L767.3 358.8 L771.6 357.3 L775.7 355.3 L780.0 353.8"/><path d="M727.9 387.4 L732.1 389.0 L736.4 390.2 L740.4 392.2 L744.6 393.7 L748.7 395.3 L752.6 396.5 L756.5 397.9 L760.4 399.3 L764.3 400.5 L768.4 401.3 L772.1 403.1 L776.2 403.7 L780.0 405.2"/><path d="M727.9 387.4 L729.6 391.7 L730.7 396.1 L732.4 400.4 L733.2 404.9 L734.9 409.2 L735.6 413.2 L736.1 417.1 L736.5 421.1 L737.6 425.0 L738.0 429.0 L738.8 433.0 L739.0 437.1 L738.7 441.2 L738.3 445.3 L739.0 449.4 L739.0 453.5 L738.8 457.7 L738.5 461.8 L739.0 465.9 L738.8 470.0"/><path d="M727.9 387.4 L725.8 391.6 L724.6 396.2 L722.4 400.4 L721.0 404.9 L719.0 409.2 L716.0 412.2 L713.6 415.7 L711.4 419.4 L708.1 422.1 L706.0 425.9 L703.2 429.0 L699.5 431.5 L696.7 435.0 L692.8 437.3 L689.4 440.1 L686.4 443.3 L682.7 445.8 L679.4 448.8 L676.4 451.6 L674.0 455.1 L670.9 457.9 L668.3 461.1 L665.4 464.0 L662.8 467.3 L659.6 470.0"/><path d="M727.9 387.4 L724.0 389.5 L719.6 390.4 L715.7 392.6 L711.4 394.0 L707.4 395.8 L703.1 397.2 L699.2 399.3 L695.0 400.5 L690.8 401.9 L686.6 403.1 L682.4 404.3 L677.9 404.7 L673.8 406.4 L669.5 407.2 L665.4 406.9 L661.3 406.8 L657.1 407.7 L653.0 407.0 L648.9 406.8 L644.8 407.4 L640.6 407.0 L636.5 407.1 L632.4 407.1 L628.3 407.5 L624.1 406.8 L620.0 407.2"/><path d="M620.0 438.9 L624.0 438.3 L628.0 438.0 L632.0 437.6 L635.8 436.1 L639.8 435.8 L643.7 435.0 L647.7 434.4 L651.6 433.8 L655.6 433.5 L659.6 433.0 L663.8 431.8 L668.1 430.9 L672.3 429.5 L676.5 428.3 L680.8 427.4 L685.1 426.2 L689.3 425.0 L693.6 424.2 L697.9 423.3 L702.0 421.5 L706.4 420.9 L710.5 419.2 L714.7 418.2 L719.0 417.1"/><path d="M679.4 366.6 L680.0 362.5 L681.3 358.5 L681.7 354.4 L682.6 350.3 L684.0 346.3 L684.6 342.2 L685.9 338.2 L686.4 334.1 L687.3 330.0"/><path d="M734.9 409.2 L738.9 410.4 L742.7 412.1 L746.9 412.7 L750.6 414.9 L754.6 416.1 L758.6 417.1 L762.9 416.9 L767.2 416.4 L771.5 416.4 L775.7 415.6 L780.0 415.1"/><path d="M738.8 433.0 L742.1 435.7 L745.5 438.1 L749.0 440.5 L752.1 443.4 L755.1 446.4 L758.6 448.8 L762.9 449.5 L767.2 450.5 L771.5 450.9 L775.7 451.9 L780.0 452.8"/><path d="M635.8 433.0 L631.9 434.1 L627.8 434.7 L624.0 435.9 L620.0 436.9"/><path d="M639.8 369.6 L639.5 365.6 L638.3 361.7 L637.5 357.7 L636.6 353.8 L635.5 349.9 L634.6 345.9 L634.2 341.9 L633.5 337.9 L632.9 333.9 L631.9 330.0"/><path d="M780.0 299.8 L784.2 301.9 L787.7 305.2 L792.0 307.0 L795.8 309.7 L798.7 312.6 L801.9 315.1 L805.6 317.1 L808.6 319.8 L811.9 322.3 L815.0 324.8 L818.0 327.6 L821.2 330.2 L824.6 332.5 L828.8 332.8 L833.1 333.7 L837.3 334.4 L841.6 334.9 L845.9 335.1 L850.1 335.9 L854.4 336.6 L858.6 337.6 L862.8 338.1 L867.1 338.4 L871.2 336.1 L875.0 333.5 L879.8 332.7 L884.6 332.7 L889.3 331.4 L894.0 330.9 L898.8 330.5 L902.9 331.7 L906.7 333.5 L910.6 335.2 L914.6 336.6 L918.5 338.2 L922.6 339.4 L926.4 342.5 L930.5 345.3"/><path d="M824.6 332.5 L826.7 328.8 L829.4 325.5 L832.3 322.3 L834.4 318.6 L836.7 315.0 L839.4 311.7 L841.5 307.1 L843.2 302.4 L845.3 297.8 L844.9 293.4 L844.1 288.9 L844.1 284.4 L843.4 280.0"/><path d="M824.6 332.5 L823.0 336.4 L820.8 340.1 L818.9 343.9 L817.4 347.8 L815.7 351.7 L813.3 355.3 L811.7 359.2 L811.1 364.1 L811.0 369.1 L810.1 374.1 L809.7 379.0 L811.5 383.1 L813.5 387.0 L815.4 391.0 L817.2 395.1 L819.6 398.8 L821.8 402.4 L823.8 406.1 L826.5 409.4 L829.0 412.8 L830.8 416.7 L833.5 420.0"/><path d="M824.6 332.5 L820.5 334.7 L816.3 336.7 L812.3 339.2 L807.9 340.8 L804.1 343.5 L799.8 345.3 L794.8 345.6 L789.9 346.5 L784.9 346.7 L780.0 347.3"/><path d="M867.1 338.4 L866.8 333.7 L865.9 329.0 L865.8 324.3 L865.1 319.6 L866.6 315.7 L867.9 311.7 L868.9 307.6 L870.6 303.7 L872.2 299.8 L873.2 295.7 L874.7 291.8 L876.0 287.8 L877.9 284.0 L879.0 280.0"/><path d="M845.3 311.7 L849.9 312.4 L854.2 314.1 L858.7 314.5 L863.2 315.6 L864.9 319.4 L867.3 322.7 L869.2 326.3 L870.8 330.1 L873.1 333.5"/><path d="M922.6 339.4 L923.0 335.1 L923.8 330.8 L924.8 326.6 L926.4 322.5 L926.5 318.1 L927.9 314.0 L928.5 309.7 L930.2 305.5 L931.3 301.2 L932.5 296.9 L934.5 292.8 L936.0 288.6 L936.9 284.2 L938.4 280.0"/><path d="M922.6 339.4 L926.1 337.2 L929.5 334.7 L933.0 332.6 L936.5 330.4 L940.2 328.5 L943.9 326.5 L947.2 324.0 L950.9 322.0 L954.3 319.6 L957.0 314.6 L960.0 309.7"/><path d="M894.9 355.2 L891.5 357.8 L888.8 361.1 L885.8 364.1 L882.4 366.6 L879.0 369.0 L876.4 372.5 L873.1 375.0 L870.7 379.0 L868.4 383.0 L866.4 387.1 L864.0 391.0 L861.7 394.9 L859.2 398.8 L857.0 402.9 L855.1 407.2 L853.1 411.4 L851.1 415.7 L849.3 420.0"/><path d="M898.8 330.5 L898.0 334.6 L897.3 338.7 L897.3 342.9 L896.5 347.1 L895.0 351.0 L894.9 355.2"/><path d="M557.8 355.6 L561.8 353.7 L566.0 352.1 L569.7 349.7 L573.6 348.4 L577.7 347.7 L581.5 345.8 L585.4 344.6 L589.5 343.8 L593.7 341.9 L597.8 339.9 L602.2 338.6 L606.4 336.9 L610.8 335.3 L615.1 333.9 L619.2 331.9 L623.2 330.0 L627.4 328.5 L631.7 327.1 L635.9 325.7 L640.0 324.0"/><path d="M557.8 355.6 L559.7 359.5 L561.4 363.4 L563.0 367.3 L564.0 371.5 L565.7 375.4 L566.7 379.4 L567.4 383.3 L567.7 387.3 L568.4 391.3 L568.9 395.3 L569.7 399.2 L570.5 404.1 L571.1 409.1 L571.4 414.0 L571.7 419.0 L570.9 423.1 L569.6 427.0 L568.4 431.0 L567.2 434.9 L565.7 438.8 L563.6 442.4 L560.9 445.7 L558.8 449.4 L556.4 452.9 L554.4 456.6 L551.9 460.0"/><path d="M565.7 375.4 L570.2 375.8 L574.6 376.2 L579.0 376.3 L583.3 377.3 L587.8 377.2 L592.2 377.7 L596.6 378.3 L600.9 379.1 L605.3 379.4 L609.7 379.0 L614.0 378.9 L618.3 379.0 L622.7 379.1 L627.0 379.4 L631.3 379.8 L635.7 379.0 L640.0 379.4"/><path d="M589.5 343.8 L589.3 347.8 L587.7 351.6 L588.0 355.7 L587.0 359.6 L585.9 363.5 L585.2 367.5 L585.2 371.5 L584.2 375.4 L583.6 379.4 L583.3 383.5 L582.0 387.3 L581.2 391.3 L580.0 395.2 L579.6 399.2"/><path d="M605.3 379.4 L604.5 383.7 L603.4 387.9 L602.9 392.2 L602.2 396.4 L601.0 400.6 L600.1 404.8 L599.4 409.1 L600.1 413.7 L600.9 418.3 L601.4 423.0"/><path d="M540.0 329.9 L543.5 332.1 L547.3 333.5 L550.7 335.8 L554.3 337.8 L557.8 339.8 L557.7 345.1 L557.7 350.4 L557.8 355.6"/><path d="M579.6 320.0 L581.6 323.8 L582.5 328.1 L584.3 332.0 L586.2 335.9 L587.8 339.8 L589.5 343.8"/></g>
<g fill="none" stroke="#a58c9c" stroke-width="1" stroke-dasharray="3 1.2" stroke-linejoin="round"><path d="M618.1 486.0 L621.2 487.2 L624.5 487.9 L627.4 489.6 L630.6 490.6 L633.5 491.3 L636.2 492.8 L638.8 494.7 L641.9 495.1 L644.9 493.5 L648.1 493.0 L651.5 492.6 L654.4 490.8 L657.7 490.6 L658.9 487.4 L661.6 485.2 L663.5 482.5 L664.5 479.2 L666.6 476.8 L668.7 474.4 L671.8 473.0 L673.4 470.0 L675.8 467.9 L679.6 467.3 L683.4 466.6 L687.2 465.7 L689.9 467.5 L692.5 469.6 L695.3 471.4 L698.5 472.4 L701.5 473.4 L704.5 474.2 L707.6 474.8 L710.7 475.3 L713.9 475.6 L717.0 475.9 L720.0 477.0"/><path d="M687.2 445.3 L688.3 449.0 L688.7 452.8 L689.4 456.6 L689.2 459.7 L687.4 462.5 L687.2 465.7"/><path d="M801.8 114.0 L805.9 113.8 L809.7 112.0 L812.6 110.9 L815.7 111.4 L818.6 110.5 L821.6 110.1 L824.8 109.7 L827.5 107.9 L830.7 107.7 L833.5 106.1 L832.6 102.9 L833.6 99.4 L832.3 96.2 L831.6 93.0 L831.6 89.6 L831.5 86.3 L829.7 83.5 L826.9 81.5 L825.5 78.4 L828.8 77.2 L831.9 75.7 L835.2 74.8 L838.6 73.9 L841.9 73.0 L845.3 72.4 L848.8 71.6 L852.3 71.9 L855.7 70.8 L859.2 70.5 L861.9 72.9 L865.1 74.4 L867.1 78.4 L871.2 78.0 L875.0 76.4 L876.2 79.3 L877.8 81.9 L880.0 84.1 L881.6 86.7 L883.0 89.5 L885.2 91.7 L886.9 94.2 L889.4 96.3 L890.9 99.2 L892.8 101.7 L894.9 104.1 L898.4 104.1 L901.9 104.5 L905.3 105.1 L908.7 106.1 L911.9 106.0 L915.1 105.8 L918.2 105.2 L921.4 104.4 L924.6 104.1 L927.7 102.7 L931.0 102.0 L934.5 102.1 L937.2 100.4 L939.8 98.2 L942.4 96.2 L945.0 94.2 L947.3 91.8 L949.9 89.8 L952.6 87.9 L955.2 85.8 L958.2 84.3"/><path d="M934.5 102.1 L935.8 105.2 L936.9 108.4 L939.0 111.0 L940.4 114.0 L940.6 117.5 L940.7 121.1 L941.8 124.4 L942.4 127.9 L940.8 130.5 L939.7 133.3 L938.3 136.0 L938.3 139.3 L936.4 141.8 L938.1 144.6 L938.1 148.1 L939.6 151.0 L941.5 153.8 L942.4 157.0"/><path d="M883.0 17.0 L881.5 20.0 L881.9 23.5 L880.5 26.5 L879.8 29.7 L879.0 32.8 L876.5 34.7 L875.2 37.6 L873.1 39.8 L871.0 42.0 L869.3 44.5 L867.1 46.7 L864.6 50.4 L863.2 54.6 L861.1 57.1 L859.7 60.0 L859.0 63.3 L856.2 65.3 L855.2 68.5 L859.2 70.5"/><path d="M905.3 171.7 L904.5 175.3 L901.8 178.2 L901.5 182.1 L899.6 185.3 L897.1 187.3 L894.7 189.4 L892.5 191.8 L890.6 194.3 L889.7 197.8 L888.5 201.2 L886.8 204.4 L886.0 207.9 L884.6 210.8 L884.3 213.9 L883.8 217.0 L880.6 217.8 L877.5 219.0 L874.3 219.8 L871.0 220.3 L867.9 221.5 L864.9 222.4 L861.9 223.0 L858.8 223.6 L855.8 224.3 L853.0 226.0 L849.8 226.0 L849.5 229.2 L848.0 232.0 L847.5 235.1 L848.3 238.5 L848.7 242.0 L850.8 245.1 L850.9 248.7 L852.1 251.6 L852.4 254.7 L853.2 257.7"/><path d="M905.3 171.7 L908.1 173.5 L911.5 174.0 L914.6 175.1 L917.7 176.2 L920.6 175.1 L923.5 174.4 L926.5 173.6 L929.0 171.7 L930.3 168.9 L931.4 166.1 L932.9 163.5 L933.9 160.5 L935.8 158.1 L937.2 154.8 L938.9 151.6 L938.8 147.8 L940.4 144.5"/><path d="M926.8 180.8 L928.6 183.3 L928.9 186.5 L930.9 189.0 L931.3 192.1 L934.0 189.8 L937.2 188.1 L939.2 185.0 L942.7 183.6 L944.9 180.8 L947.6 183.2 L950.2 185.8 L953.9 186.9 L956.2 189.8 L958.8 187.2 L960.8 184.2 L963.1 181.4 L965.3 178.5 L968.7 178.9 L971.9 180.4 L975.4 180.4 L978.9 180.8"/><path d="M955.1 113.3 L958.1 113.6 L961.1 113.3 L964.1 114.2 L967.1 114.9 L970.2 113.7 L973.2 114.6 L976.2 114.7 L979.2 114.8 L982.1 116.0 L985.1 116.3 L988.2 115.8 L991.2 116.3 L994.3 115.7 L997.4 116.4 L1000.4 115.2 L1003.5 115.8 L1006.6 114.5 L1009.8 113.2 L1012.8 111.4 L1016.2 110.7"/><path d="M952.5 176.9 L956.0 177.3 L959.2 179.3 L962.6 180.2 L966.3 179.6 L969.4 181.7 L972.9 182.0 L975.9 184.2 L979.1 186.1 L982.9 187.1 L985.6 189.7 L986.9 192.9 L989.2 195.5 L990.3 198.8 L992.4 201.6 L993.8 204.7 L995.8 207.5 L998.9 209.1 L1002.3 209.8 L1005.3 211.5 L1008.6 212.6 L1011.7 212.4 L1014.7 211.5 L1017.6 210.6 L1020.3 208.6 L1023.5 208.5 L1026.4 207.5 L1029.6 207.0 L1032.4 205.1 L1035.3 203.7 L1038.7 203.8 L1041.6 202.4 L1042.8 199.4 L1044.4 196.5 L1044.3 193.1 L1045.1 190.0 L1046.7 187.1 L1049.8 185.5 L1053.0 184.2 L1055.8 182.2 L1058.3 179.8 L1061.5 178.4 L1064.6 176.9 L1067.4 175.5 L1070.5 175.1 L1073.6 174.8 L1076.4 173.5 L1079.4 172.7 L1082.4 171.8"/><path d="M1021.3 100.5 L1024.5 101.8 L1027.3 103.7 L1030.6 104.8 L1033.3 107.1 L1036.6 108.2 L1039.1 109.8 L1041.8 111.4 L1044.2 113.3"/><path d="M700.0 477.0 L703.2 476.6 L706.5 476.4 L709.8 476.5 L712.9 475.4 L716.1 475.1 L719.4 475.3 L722.6 474.7 L726.0 474.7 L729.4 474.5 L732.8 474.6 L736.2 474.7 L739.3 474.2 L742.4 473.6 L745.6 474.1 L748.7 474.2 L751.8 473.6 L754.9 473.2 L758.0 472.5 L761.1 472.4 L763.5 474.6 L766.1 476.6 L767.9 479.2 L768.3 482.3 L769.7 485.2 L770.2 488.3 L773.4 490.3 L775.8 493.4 L779.2 495.1 L782.8 497.1 L786.0 499.6 L786.2 503.0 L787.7 506.0 L788.3 509.2 L789.5 512.3 L790.6 515.5 L792.2 518.7 L792.8 522.3"/><path d="M795.1 479.2 L798.3 479.1 L801.0 477.2 L804.1 477.0 L805.6 474.1 L805.2 470.8 L806.4 467.9 L809.2 466.7 L812.3 466.2 L814.8 464.3 L817.7 463.4 L819.2 466.4 L821.2 469.2 L822.3 472.4 L822.1 476.0 L822.6 479.4 L824.5 482.5 L824.5 486.0 L825.9 488.9 L826.1 492.1 L826.8 495.1"/><path d="M804.1 431.7 L806.0 434.4 L808.0 436.9 L809.0 440.2 L811.4 442.5 L813.2 445.3 L815.6 447.6 L816.5 450.9 L819.2 453.1 L820.8 455.9 L822.3 458.9"/><path d="M647.2 617.2 L650.2 618.4 L653.1 619.9 L656.2 620.9 L658.9 622.9 L662.5 622.9 L664.9 625.6 L668.0 626.5 L671.0 627.9 L674.0 629.2 L677.4 629.6 L680.2 631.3 L683.4 630.8 L686.3 629.5 L689.1 627.7 L692.5 627.8 L695.3 626.2 L698.5 625.6 L701.4 624.2 L704.5 623.9 L707.4 625.2 L710.6 624.5 L713.6 624.9 L716.6 625.3 L719.7 625.5 L722.6 626.6 L723.2 623.3 L723.1 619.9 L723.5 616.6 L725.0 613.5 L725.0 610.1"/><path d="M680.2 631.3 L678.7 634.1 L677.3 637.0 L675.0 639.3 L674.0 642.4 L672.3 645.0 L670.7 647.8 L669.6 650.8 L669.0 654.0 L667.5 656.8 L666.1 659.7 L666.3 663.2 L664.6 666.0 L663.7 669.0 L665.7 671.4 L667.0 674.4 L668.8 677.0 L671.3 679.1 L673.0 681.8 L674.2 684.8 L675.6 687.7 L677.8 690.0"/><path d="M701.4 624.2 L703.2 626.9 L703.8 630.1 L705.3 632.9 L706.2 636.0 L707.6 638.8 L707.9 642.1 L709.6 644.9 L710.8 647.8 L712.9 650.4 L715.1 653.0 L717.9 654.9 L720.3 657.2 L722.6 659.6 L725.9 659.8 L728.8 661.6 L732.2 661.3 L735.2 662.5 L738.5 663.0 L741.5 664.3"/><path d="M722.6 626.6 L725.9 625.6 L729.4 626.3 L732.8 626.3 L736.1 625.1 L739.5 625.6 L742.8 624.5 L746.2 624.2 L749.2 624.9 L752.2 625.8 L755.5 625.2 L758.6 625.4 L761.6 626.1 L764.7 626.3 L767.7 627.4 L770.8 627.4 L773.9 627.8 L776.8 628.9"/><path d="M741.5 664.3 L742.4 667.3 L743.5 670.3 L745.0 673.0 L746.1 676.0 L748.6 678.3 L749.2 681.5 L750.7 684.3 L752.3 687.0 L753.3 690.0"/><path d="M620.0 395.3 L622.9 394.5 L625.4 392.5 L628.3 391.5 L631.4 391.0 L634.0 389.4 L637.2 389.2 L639.8 387.4 L642.8 389.0 L645.9 390.3 L649.4 390.9 L652.3 392.7 L655.6 393.4 L658.6 394.1 L661.5 395.2 L664.6 395.1 L667.5 396.1 L670.5 396.6 L673.5 397.3 L676.5 397.7 L679.4 398.1 L682.4 398.7 L685.3 399.3 L688.7 397.8 L692.1 396.8 L695.7 396.0 L699.2 395.3 L702.7 393.6 L705.9 391.6 L709.1 389.4 L712.5 389.1 L715.8 388.4 L719.0 387.4"/><path d="M723.0 409.2 L726.1 408.8 L728.8 406.9 L731.9 406.2 L734.9 405.2 L737.7 404.2 L740.9 405.0 L743.7 403.2 L746.7 403.3 L749.0 399.4 L750.7 395.3 L748.9 391.3 L746.7 387.4 L749.0 383.6 L750.7 379.5 L752.3 376.6 L753.9 373.7 L755.6 370.9 L756.9 367.8 L758.9 365.2 L760.6 362.3 L762.6 359.7"/><path d="M730.9 349.8 L734.4 349.1 L738.0 349.2 L741.5 347.8 L745.2 349.0 L748.7 347.8 L752.1 348.8 L755.5 349.6 L759.2 348.9 L762.6 349.8 L765.6 351.0 L768.5 352.4 L771.1 354.1 L774.0 355.5 L776.4 357.7"/><path d="M879.0 280.0 L879.7 283.3 L878.9 286.6 L878.2 289.9 L879.3 293.2 L878.9 296.5 L879.0 299.8 L878.2 303.2 L876.7 306.3 L875.8 309.6 L874.9 313.0 L873.3 316.1 L873.1 319.6 L871.8 322.8 L871.3 326.3 L870.3 329.6 L868.9 332.7 L867.8 336.0 L867.1 339.4 L866.9 342.8 L865.3 345.9 L865.2 349.3 L864.1 352.5 L864.5 356.0 L863.2 359.2 L863.9 362.3 L864.7 365.4 L864.5 368.7 L865.1 371.8 L865.1 375.0 L861.6 374.8 L858.2 374.5 L854.8 373.0 L851.3 373.1 L849.1 375.4 L847.5 378.2 L845.3 380.5 L843.4 383.0 L842.2 386.4 L839.6 389.0 L838.0 392.2 L836.9 395.6 L835.4 398.8 L833.9 402.1 L830.9 404.4 L829.9 408.0 L827.5 410.7"/><path d="M780.0 303.8 L782.3 305.9 L784.0 308.5 L785.9 311.0 L788.0 313.2 L789.9 315.6 L789.3 318.6 L788.9 321.6 L788.4 324.5 L788.4 327.6 L788.0 330.6 L787.3 333.5 L786.0 336.4 L785.9 339.4 L785.5 342.8 L783.8 345.8 L782.5 349.0 L781.1 352.0 L780.0 355.2"/><path d="M799.8 390.9 L801.9 393.3 L804.7 394.9 L807.6 396.3 L809.7 398.8 L812.6 400.0 L815.0 402.0 L817.0 404.4 L819.5 406.2 L822.6 407.1 L825.0 408.9 L827.5 410.7"/></g>
<g fill="none" stroke="#a58c9c" stroke-width="0.9" stroke-dasharray="2.5 1.5" stroke-linejoin="round" opacity="0.6"><path d="M860.0 594.7 L863.0 593.2 L866.2 592.0 L869.6 591.8 L872.8 590.6 L876.0 589.6 L879.0 588.1 L882.3 587.2 L885.5 586.2 L888.8 586.4 L892.0 585.9 L895.1 584.6 L898.4 584.3 L901.6 583.5 L904.9 584.2 L908.1 583.4 L910.7 581.7 L913.9 581.6 L916.9 580.9 L919.6 579.7 L922.2 577.9 L925.3 577.5 L927.7 575.4 L930.8 574.9 L933.4 576.4 L936.6 576.6 L939.2 578.4 L942.4 578.4 L944.9 580.2 L947.5 581.9 L950.7 581.9 L953.4 583.4 L956.5 582.8 L959.7 583.3 L962.8 582.6 L966.0 582.7 L969.1 583.6 L972.3 584.2 L975.4 584.2 L978.6 583.9 L981.7 583.4 L984.5 582.1 L987.5 581.4 L990.4 580.1 L993.2 578.9 L995.8 577.3 L998.8 576.5 L1001.5 574.9 L1004.7 574.7 L1007.8 574.6 L1011.0 574.4 L1014.1 574.7 L1017.2 574.8 L1020.4 574.6 L1023.5 575.5 L1026.7 575.0 L1029.8 574.9 L1032.9 574.2 L1036.3 574.4 L1039.4 573.6 L1042.3 571.7 L1045.5 571.5 L1048.8 571.4 L1051.8 570.4 L1055.1 570.6 L1058.1 569.3 L1061.2 570.2 L1064.3 571.2 L1067.5 571.4 L1070.8 571.3 L1074.0 571.7 L1077.0 572.9 L1080.3 573.1 L1083.3 574.4 L1086.4 574.9 L1089.5 575.9 L1092.6 576.2 L1095.7 577.1 L1099.0 576.8 L1101.9 578.7 L1105.0 579.3 L1108.3 578.8 L1111.3 580.0 L1114.4 580.7 L1117.5 581.2 L1120.7 581.3 L1123.8 582.0 L1127.0 582.6 L1130.0 583.4"/><path d="M879.8 625.9 L883.2 626.0 L886.4 627.0 L889.4 628.6 L892.9 628.6 L895.8 630.6 L899.1 631.2 L902.5 631.5 L905.7 631.5 L908.9 630.7 L912.2 630.8 L915.3 629.5 L918.7 629.7 L921.8 628.9 L925.1 628.7 L928.4 627.7 L931.9 627.5 L934.9 625.4 L938.4 625.3 L941.7 624.4 L944.9 623.0 L947.9 621.5 L951.4 621.9 L954.3 620.1 L957.5 619.3 L960.5 618.0 L963.8 617.5 L967.1 617.1 L970.0 615.3 L973.2 614.5 L976.4 614.6 L979.6 614.4 L982.7 614.2 L985.8 613.6 L988.9 612.9 L992.1 612.4 L995.2 612.2 L998.4 611.8 L1001.5 611.7 L1004.1 613.3 L1007.0 614.3 L1010.2 614.5 L1013.0 615.6 L1015.9 616.3 L1018.3 618.7 L1021.6 618.5 L1024.2 620.2 L1027.1 621.5 L1030.1 622.6 L1032.9 624.0 L1035.5 625.9 L1038.8 626.2 L1041.9 625.0 L1045.2 624.9 L1048.5 624.8 L1051.7 623.9 L1055.0 623.9 L1058.1 623.0 L1061.4 622.8 L1064.5 621.9 L1067.6 621.2 L1070.8 621.1 L1073.9 620.2 L1077.0 619.0 L1080.3 619.3 L1083.4 618.5 L1086.4 617.4 L1089.5 618.3 L1092.6 618.0 L1095.8 617.9 L1098.9 617.9 L1102.0 618.6 L1105.2 618.1 L1108.2 619.2 L1111.3 619.3 L1114.4 619.8 L1117.6 618.9 L1120.7 619.7 L1123.8 619.9 L1126.9 620.2 L1130.0 620.2"/><path d="M860.0 657.0 L863.1 656.0 L866.3 655.4 L869.4 654.5 L872.5 653.7 L875.7 653.2 L878.9 652.6 L881.9 651.3 L885.0 650.7 L888.1 649.5 L891.1 648.5 L894.0 649.7 L896.6 651.5 L899.3 653.0 L902.4 653.6 L905.2 655.0 L908.4 655.4 L910.7 657.8 L913.7 658.8 L916.6 659.8 L919.8 660.0 L922.9 659.3 L926.0 660.0 L929.2 660.0 L932.3 659.3 L935.5 659.7 L938.6 660.2 L941.8 660.3 L944.9 659.8 L948.0 660.8 L951.1 661.4 L954.2 662.4 L957.4 662.8 L960.8 662.3 L963.8 663.4 L967.1 663.5 L969.9 665.5 L973.2 665.5 L976.5 665.0 L979.6 663.4 L982.8 662.6 L986.1 661.8 L989.4 661.6 L992.6 660.6 L995.9 659.8 L998.9 658.7 L1002.2 659.4 L1005.3 658.5 L1008.4 658.2 L1011.7 659.0 L1014.8 658.6 L1017.9 658.2 L1021.1 657.9 L1024.2 657.0 L1027.0 655.7 L1029.5 653.5 L1032.6 652.6 L1035.6 651.5 L1038.6 650.5 L1041.1 648.5 L1044.2 648.2 L1047.3 647.8 L1050.4 649.2 L1053.5 648.9 L1056.6 649.0 L1059.7 648.5 L1062.8 648.2 L1065.9 648.2 L1068.9 647.9 L1072.0 648.3 L1075.1 648.5 L1078.4 649.5 L1081.5 651.1 L1084.8 652.0 L1088.3 652.3 L1091.8 652.8 L1094.9 654.2 L1098.2 654.4 L1101.2 652.4 L1104.4 651.9 L1107.7 652.4 L1110.9 651.8 L1114.2 651.8 L1117.3 650.9 L1120.5 650.5 L1123.7 650.1 L1127.0 649.7 L1130.0 648.5"/><path d="M885.5 560.8 L884.5 563.8 L884.9 567.0 L884.6 570.1 L884.6 573.2 L884.7 576.3 L884.1 579.4 L884.1 582.5 L883.9 585.6 L883.6 588.7 L883.5 591.8 L882.4 594.9 L882.8 598.0 L881.8 601.0 L881.9 604.2 L880.8 607.2 L880.9 610.3 L880.5 613.4 L880.4 616.5 L880.0 619.6 L879.4 622.7 L879.8 625.9 L880.1 629.0 L882.4 631.3 L883.3 634.2 L884.4 637.1 L885.6 639.9 L885.8 643.0 L886.6 645.9 L889.0 648.3 L889.9 651.1 L889.8 654.4 L892.1 656.8 L893.2 659.6 L893.0 662.9 L895.0 665.4 L896.5 668.0 L896.8 671.1 L899.2 673.3 L902.1 675.0 L904.5 677.3 L907.0 679.4 L909.0 682.1 L911.4 684.3 L913.9 686.5 L916.9 688.0 L919.4 690.1"/><path d="M930.8 555.1 L932.3 557.7 L934.6 560.0 L936.0 562.7 L937.5 565.4 L939.7 567.7 L940.7 570.7 L941.7 573.7 L944.1 575.8 L945.2 578.7 L946.7 581.4 L949.6 583.2 L950.6 586.2 L950.9 589.4 L949.7 592.4 L948.4 595.3 L948.8 598.5 L947.7 601.5 L947.5 604.6 L948.0 607.8 L946.9 610.8 L946.1 613.8 L946.4 617.0 L946.0 620.1 L944.9 623.0 L943.9 626.2 L943.8 629.5 L942.5 632.5 L942.4 635.8 L942.0 639.1 L940.9 642.2 L939.5 645.2 L939.3 648.5 L940.5 651.4 L941.2 654.5 L941.9 657.6 L943.6 660.3 L943.8 663.6 L946.0 666.1 L946.4 669.3 L947.7 672.1 L948.8 675.1 L948.8 678.4 L950.9 681.0 L951.0 684.3 L952.4 687.1 L953.4 690.1"/><path d="M984.5 555.1 L983.8 558.2 L983.9 561.4 L982.8 564.5 L983.2 567.7 L982.3 570.8 L983.2 574.0 L982.3 577.1 L982.6 580.3 L981.7 583.4 L982.8 586.4 L982.9 589.6 L982.9 592.7 L983.3 595.8 L983.0 599.0 L983.4 602.1 L984.2 605.2 L983.7 608.3 L984.5 611.4 L984.5 614.5 L985.7 617.3 L987.8 619.6 L989.6 622.0 L991.1 624.6 L991.6 627.8 L993.6 630.1 L995.2 632.6 L996.8 635.2 L998.4 637.7 L1000.4 640.0 L1001.5 642.8 L1000.8 646.0 L1000.5 649.1 L999.8 652.2 L1000.1 655.5 L1000.4 658.7 L999.5 661.8 L998.8 664.9 L998.4 668.0 L998.4 671.2 L998.0 674.4 L997.5 677.5 L996.4 680.6 L997.2 683.9 L996.8 687.0 L995.9 690.1"/><path d="M1024.2 563.6 L1025.8 566.3 L1026.4 569.5 L1028.6 572.0 L1029.8 574.9 L1029.9 578.0 L1028.6 580.9 L1028.3 583.9 L1028.0 587.0 L1028.7 590.1 L1027.7 593.0 L1027.5 596.1 L1027.2 599.1 L1026.7 602.1 L1026.4 605.1 L1025.7 608.1 L1026.1 611.2 L1024.8 614.1 L1023.8 617.1 L1024.2 620.2 L1025.3 623.0 L1026.7 625.8 L1027.3 628.8 L1028.9 631.4 L1029.2 634.6 L1030.4 637.4 L1031.6 640.2 L1033.2 642.9 L1035.1 645.4 L1035.5 648.5 L1035.7 651.8 L1034.7 654.9 L1033.7 658.0 L1033.9 661.3 L1032.5 664.4 L1032.7 667.7 L1033.1 671.0 L1031.9 674.1 L1030.8 677.2 L1031.4 680.6 L1030.2 683.6 L1030.0 686.9 L1029.8 690.1"/><path d="M1063.8 560.8 L1062.3 563.9 L1059.6 566.2 L1058.1 569.3 L1058.8 572.3 L1058.6 575.5 L1059.2 578.6 L1060.1 581.6 L1060.6 584.7 L1061.9 587.7 L1061.1 591.0 L1061.8 594.0 L1063.0 597.0 L1064.0 600.0 L1063.8 603.2 L1064.6 606.2 L1065.0 609.3 L1065.6 612.4 L1067.2 615.2 L1067.9 618.2 L1068.7 621.2 L1069.2 624.3 L1070.3 627.3 L1070.0 630.5 L1071.8 633.3 L1072.0 636.4 L1073.5 639.3 L1073.2 642.6 L1075.0 645.3 L1075.1 648.5 L1075.2 651.6 L1073.9 654.4 L1072.7 657.3 L1072.5 660.4 L1071.7 663.3 L1071.5 666.4 L1070.1 669.2 L1070.7 672.4 L1070.4 675.4 L1068.9 678.2 L1068.4 681.2 L1068.3 684.3 L1067.9 687.3 L1066.6 690.1"/><path d="M1103.4 560.8 L1101.1 563.0 L1098.2 564.4 L1096.3 567.0 L1094.2 569.4 L1091.3 570.9 L1088.6 572.6 L1086.4 574.9 L1087.2 578.0 L1089.1 580.8 L1089.5 584.0 L1090.9 586.9 L1092.2 589.8 L1091.8 593.4 L1093.2 596.2 L1094.7 599.1 L1095.1 602.3 L1096.1 605.4 L1098.3 608.0 L1098.7 611.2 L1099.9 614.2 L1100.6 617.4 L1100.8 620.5 L1099.3 623.4 L1098.6 626.5 L1098.7 629.6 L1097.7 632.6 L1097.7 635.8 L1097.4 638.9 L1096.7 641.9 L1095.8 644.9 L1096.2 648.1 L1095.4 651.1 L1094.9 654.2 L1097.0 656.6 L1097.9 659.7 L1099.2 662.6 L1101.1 665.2 L1103.1 667.7 L1103.5 671.1 L1105.2 673.7 L1106.7 676.5 L1109.1 678.8 L1109.5 682.2 L1111.7 684.6 L1113.7 687.1 L1114.7 690.1"/></g>
<g fill="#fff" opacity="0.13"><rect x="435" y="170" width="694" height="1"/><rect x="435" y="362" width="694" height="1"/><rect x="435" y="554" width="694" height="1"/></g>
<g font-family="Liberation Sans, sans-serif" stroke="#f6f5f1" stroke-width="2" paint-order="stroke" stroke-linejoin="round"><text x="556.7" y="424.6" textLength="41.6" lengthAdjust="spacingAndGlyphs" font-size="9.6" font-weight="bold" fill="#4b3c5e" >Portugal</text><text x="673" y="438.7" textLength="33.6" lengthAdjust="spacingAndGlyphs" font-size="9.6" font-weight="bold" fill="#4b3c5e" >España</text><text x="903.8" y="98.9" textLength="31.3" lengthAdjust="spacingAndGlyphs" font-size="9.6" font-weight="bold" fill="#4b3c5e" >France</text><text x="889" y="294.6" textLength="38.9" lengthAdjust="spacingAndGlyphs" font-size="9.6" font-weight="bold" fill="#4b3c5e" >Andorra</text><text x="650.7" y="577.8" textLength="43.1" lengthAdjust="spacingAndGlyphs" font-size="9.6" font-weight="bold" fill="#4b3c5e" >Gibraltar</text><text x="1090.2" y="238.2" textLength="37.3" lengthAdjust="spacingAndGlyphs" font-size="9.6" font-weight="bold" fill="#4b3c5e" >Monaco</text><text x="1097.6" y="82.7" textLength="30.5" lengthAdjust="spacingAndGlyphs" font-size="9.6" font-weight="bold" fill="#4b3c5e" >Schwe</text><text x="1099.9" y="97.7" textLength="28.9" lengthAdjust="spacingAndGlyphs" font-size="9.6" font-weight="bold" fill="#4b3c5e" >Svizze</text><text x="732.3" y="384.6" textLength="28.6" lengthAdjust="spacingAndGlyphs" font-size="8.2" font-weight="bold" fill="#4b3c5e" >Madrid</text><text x="547" y="460.6" textLength="25" lengthAdjust="spacingAndGlyphs" font-size="8.2" font-weight="bold" fill="#4b3c5e" >Lisboa</text><text x="962.5" y="528.6" textLength="21.2" lengthAdjust="spacingAndGlyphs" font-size="8.2" font-weight="bold" fill="#4b3c5e" >Alger</text><text x="632.7" y="253.5" textLength="39.3" lengthAdjust="spacingAndGlyphs" font-size="8.2" font-weight="normal" fill="#978d9c" >Principado</text><text x="631.3" y="264" textLength="42" lengthAdjust="spacingAndGlyphs" font-size="8.2" font-weight="normal" fill="#978d9c" >de Asturias</text><text x="697.6" y="265.8" textLength="35.9" lengthAdjust="spacingAndGlyphs" font-size="8.2" font-weight="normal" fill="#978d9c" >Cantabria</text><text x="753.2" y="273.7" textLength="28.8" lengthAdjust="spacingAndGlyphs" font-size="8.2" font-weight="normal" fill="#978d9c" >Euskadi</text><text x="573.7" y="291.3" textLength="24.9" lengthAdjust="spacingAndGlyphs" font-size="8.2" font-weight="normal" fill="#978d9c" >Galicia</text><text x="755.8" y="305.1" textLength="28.8" lengthAdjust="spacingAndGlyphs" font-size="8.2" font-weight="normal" fill="#978d9c" >La Rioja</text><text x="662.8" y="335.3" textLength="32.2" lengthAdjust="spacingAndGlyphs" font-size="8.2" font-weight="normal" fill="#978d9c" >Castilla y</text><text x="670.6" y="345.2" textLength="18.4" lengthAdjust="spacingAndGlyphs" font-size="8.2" font-weight="normal" fill="#978d9c" >León</text><text x="815.8" y="349.1" textLength="26.5" lengthAdjust="spacingAndGlyphs" font-size="8.2" font-weight="normal" fill="#978d9c" >Aragón</text><text x="890.5" y="327.3" textLength="37.4" lengthAdjust="spacingAndGlyphs" font-size="8.2" font-weight="normal" fill="#978d9c" >Catalunya</text><text x="808" y="420" textLength="42" lengthAdjust="spacingAndGlyphs" font-size="8.2" font-weight="normal" fill="#978d9c" >Comunitat</text><text x="808" y="429.4" textLength="42" lengthAdjust="spacingAndGlyphs" font-size="8.2" font-weight="normal" fill="#978d9c" >Valenciana</text><text x="947" y="430.1" textLength="46" lengthAdjust="spacingAndGlyphs" font-size="8.2" font-weight="normal" fill="#978d9c" >Illes Balears</text><text x="750.5" y="430.8" textLength="29.5" lengthAdjust="spacingAndGlyphs" font-size="8.2" font-weight="normal" fill="#978d9c" >Castilla-</text><text x="744.8" y="440" textLength="35.2" lengthAdjust="spacingAndGlyphs" font-size="8.2" font-weight="normal" fill="#978d9c" >La Manch</text><text x="621" y="445.6" textLength="47.8" lengthAdjust="spacingAndGlyphs" font-size="8.2" font-weight="normal" fill="#978d9c" >Extremadura</text><text x="680.2" y="526.5" textLength="37.4" lengthAdjust="spacingAndGlyphs" font-size="8.2" font-weight="normal" fill="#978d9c" >Andalucía</text><text x="786.9" y="496.3" textLength="36.3" lengthAdjust="spacingAndGlyphs" font-size="8.2" font-weight="normal" fill="#978d9c" >Región de</text><text x="791.4" y="506.1" textLength="26.1" lengthAdjust="spacingAndGlyphs" font-size="8.2" font-weight="normal" fill="#978d9c" >Murcia</text><text x="742.6" y="613.5" textLength="25" lengthAdjust="spacingAndGlyphs" font-size="8.2" font-weight="normal" fill="#978d9c" >Melilla</text><text x="813.5" y="42.8" textLength="27.5" lengthAdjust="spacingAndGlyphs" font-size="8.2" font-weight="normal" fill="#978d9c" >Pays de</text><text x="813.5" y="52.1" textLength="27.5" lengthAdjust="spacingAndGlyphs" font-size="8.2" font-weight="normal" fill="#978d9c" >la Loire</text><text x="850.3" y="153.9" textLength="33.7" lengthAdjust="spacingAndGlyphs" font-size="8.2" font-weight="normal" fill="#978d9c" >Nouvelle-</text><text x="849.6" y="164.2" textLength="36.1" lengthAdjust="spacingAndGlyphs" font-size="8.2" font-weight="normal" fill="#978d9c" >Aquitaine</text><text x="917.3" y="244" textLength="35.5" lengthAdjust="spacingAndGlyphs" font-size="8.2" font-weight="normal" fill="#978d9c" >Occitanie</text><text x="994.7" y="159.5" textLength="37.8" lengthAdjust="spacingAndGlyphs" font-size="8.2" font-weight="normal" fill="#978d9c" >Auvergne-</text><text x="990.9" y="170" textLength="46.4" lengthAdjust="spacingAndGlyphs" font-size="8.2" font-weight="normal" fill="#978d9c" >Rhône-Alpes</text><text x="1043.6" y="214.1" textLength="36.2" lengthAdjust="spacingAndGlyphs" font-size="8.2" font-weight="normal" fill="#978d9c" >Provence-</text><text x="1042" y="223.6" textLength="39.4" lengthAdjust="spacingAndGlyphs" font-size="8.2" font-weight="normal" fill="#978d9c" >Alpes-Côte</text><text x="1051.5" y="234.6" textLength="22" lengthAdjust="spacingAndGlyphs" font-size="8.2" font-weight="normal" fill="#978d9c" >d'Azur</text><text x="1016.1" y="88" textLength="24.3" lengthAdjust="spacingAndGlyphs" font-size="8.2" font-weight="normal" fill="#978d9c" >Comté</text><text x="1068.8" y="98.4" textLength="18.9" lengthAdjust="spacingAndGlyphs" font-size="8.2" font-weight="normal" fill="#978d9c" >Vaud</text><text x="1051.5" y="118.5" textLength="26.8" lengthAdjust="spacingAndGlyphs" font-size="8.2" font-weight="normal" fill="#978d9c" >Genève</text><text x="1092.4" y="118" textLength="36.3" lengthAdjust="spacingAndGlyphs" font-size="8.2" font-weight="normal" fill="#978d9c" >Valais/Wa</text><text x="1084.6" y="143.1" textLength="44.1" lengthAdjust="spacingAndGlyphs" font-size="8.2" font-weight="normal" fill="#978d9c" >Valle d'Aosta</text><text x="1106.6" y="176.3" textLength="22.1" lengthAdjust="spacingAndGlyphs" font-size="8.2" font-weight="normal" fill="#978d9c" >Piemo</text><text x="986" y="529.6" textLength="25.4" lengthAdjust="spacingAndGlyphs" font-size="8.2" font-weight="normal" fill="#978d9c" >ΛΣ.ε Θ</text></g>
<g fill="none" stroke-linecap="round" stroke-linejoin="round"><path d="M963.5 545 Q966 547.5 968.5 544.5 L968.5 541.5 M968.5 545 L974.5 545 L974.5 541.8 M974.5 545 L978.5 545 Q980 543.5 980.3 539 M982.2 545.2 L984 545.2 L984 538.3" stroke="#f6f5f1" stroke-width="3" opacity="0.8"/><path d="M963.5 545 Q966 547.5 968.5 544.5 L968.5 541.5 M968.5 545 L974.5 545 L974.5 541.8 M974.5 545 L978.5 545 Q980 543.5 980.3 539 M982.2 545.2 L984 545.2 L984 538.3" stroke="#4b3c5e" stroke-width="1.4"/></g><g fill="#4b3c5e"><circle cx="971.5" cy="540.3" r="0.7"/><circle cx="977" cy="539.8" r="0.7"/><circle cx="966" cy="548.5" r="0.6"/></g>
<path d="M959.2 543.8 L960.1 546 L962.3 546 L960.6 547.4 L961.2 549.6 L959.2 548.3 L957.2 549.6 L957.8 547.4 L956.1 546 L958.3 546 Z" fill="#444"/>
<ellipse cx="739.4" cy="374.3" rx="9" ry="5.5" fill="#000" opacity="0.3" filter="url(#sh)" transform="rotate(-40 739.4 374.3)"/><path d="M728.4 383.5 L729.3 385.9 L731.4 385.9 L729.6999999999999 387.3 L730.4 389.5 L728.4 388.1 L726.4 389.5 L727.1 387.3 L725.4 385.9 L727.5 385.9 Z" fill="#3a3a3a"/><g transform="translate(718.77 355.37) scale(0.77 0.73)"><path d="M12.5 41 C11 34 0.7 24 0.7 12.6 A11.8 11.8 0 0 1 24.3 12.6 C24.3 24 14 34 12.5 41 Z" fill="url(#mk)" stroke="#2a6fad" stroke-width="0.8"/><ellipse cx="12.5" cy="12" rx="4.1" ry="4.3" fill="#fff"/></g>
<ellipse cx="554.4" cy="451.8" rx="9" ry="5.5" fill="#000" opacity="0.3" filter="url(#sh)" transform="rotate(-40 554.4 451.8)"/><path d="M543.4 461.0 L544.3 463.4 L546.4 463.4 L544.6999999999999 464.8 L545.4 467.0 L543.4 465.6 L541.4 467.0 L542.1 464.8 L540.4 463.4 L542.5 463.4 Z" fill="#3a3a3a"/><g transform="translate(533.77 432.87) scale(0.77 0.73)"><path d="M12.5 41 C11 34 0.7 24 0.7 12.6 A11.8 11.8 0 0 1 24.3 12.6 C24.3 24 14 34 12.5 41 Z" fill="url(#mk)" stroke="#2a6fad" stroke-width="0.8"/><ellipse cx="12.5" cy="12" rx="4.1" ry="4.3" fill="#fff"/></g></svg>
  <div class="zoom"><div class="h" style="left:6.8px;top:10.9px;width:9.8px;height:1.9px"></div><div class="h" style="left:10.75px;top:7.1px;width:1.9px;height:9.5px"></div><div class="d"></div><div class="h" style="left:7.3px;top:33.6px;width:10px;height:1.8px"></div></div>
  <div class="user"><svg class="ava" viewBox="0 0 30 30"><defs><clipPath id="avc"><circle cx="15" cy="15" r="15"/></clipPath><filter id="avb"><feGaussianBlur stdDeviation="0.5"/></filter></defs>
<g clip-path="url(#avc)">
<rect width="30" height="30" fill="#0b0b0b"/>
<g filter="url(#avb)">
<path d="M5 31 Q7 26.5 12 25.5 L18 25.5 Q23 26.5 25 31 Z" fill="#bdbdbd"/>
<rect x="11.8" y="20" width="6.4" height="6.5" fill="#8c8c8c"/>
<ellipse cx="14.8" cy="9.8" rx="9.3" ry="7.2" fill="#3c3c3c"/>
<circle cx="9" cy="6.5" r="2.6" fill="#5e5e5e"/>
<circle cx="13.5" cy="4.2" r="2.4" fill="#6a6a6a"/>
<circle cx="18.5" cy="4.6" r="2.3" fill="#5a5a5a"/>
<circle cx="21.8" cy="8" r="2" fill="#4e4e4e"/>
<circle cx="6.8" cy="11" r="1.8" fill="#555"/>
<ellipse cx="14.8" cy="15.8" rx="6.4" ry="7.5" fill="#b0b0b0"/>
<path d="M8.6 12 Q11 8 15 8.6 Q19 8 21 12 L21 9.5 Q15 5.5 8.6 9.5 Z" fill="#444"/>
<ellipse cx="12.3" cy="13.6" rx="1.5" ry="0.75" fill="#3a3a3a"/>
<ellipse cx="17.5" cy="13.6" rx="1.5" ry="0.75" fill="#3a3a3a"/>
<path d="M10.8 18 Q14.8 21.8 18.8 18 Q14.8 19.6 10.8 18 Z" fill="#2a2a2a"/>
<path d="M11.6 18.4 Q14.8 20.4 18 18.4 Q14.8 19.3 11.6 18.4 Z" fill="#eee"/>
</g>
</g>
</svg><div class="welc">Welcome, Jack</div><div class="logout">LOGOUT</div></div>
  <div class="pos">USE YOUR POSITION</div>
  <div class="attr"><span style="display:inline-block;width:6px;height:4px;background:linear-gradient(#0057b7 50%,#ffd700 50%);vertical-align:middle;margin-right:2px"></span><b>Leaflet</b> | © <b>OpenStreetMap</b> contributors</div>
 </div>
</div>
</body></html>
